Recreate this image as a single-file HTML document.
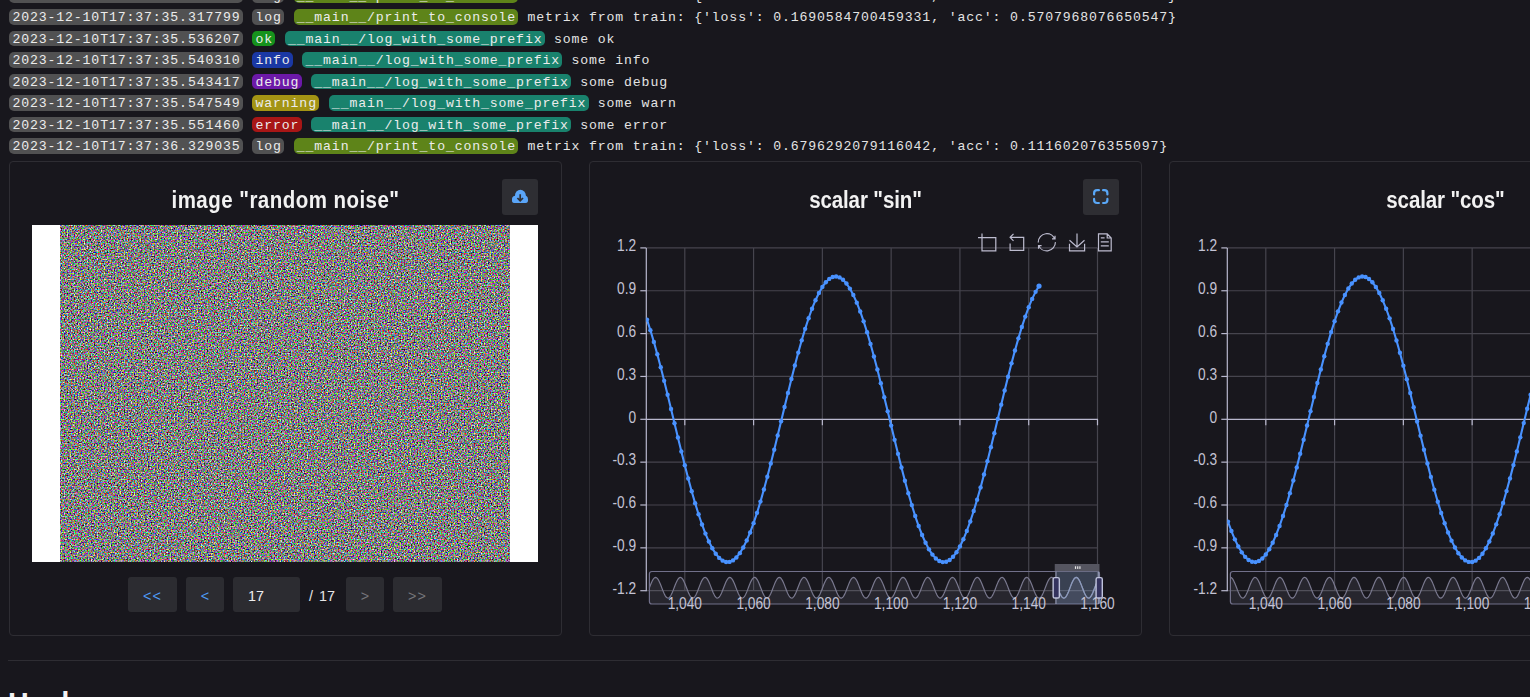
<!DOCTYPE html><html><head><meta charset="utf-8"><style>
html,body{margin:0;padding:0;background:#18171d;width:1530px;height:697px;overflow:hidden;position:relative}
.row{position:absolute;left:8.9px;white-space:pre;font:13.2px/17.4px "Liberation Mono",monospace;letter-spacing:0.86px;color:#e4e4e4;height:16px}
.b{display:inline-block;padding:0 2.37px 0 3.23px;margin:0 0.3px;border-radius:5px;height:15.6px;vertical-align:top;color:#ececec}
.card{position:absolute;top:161px;width:551px;height:473px;border:1px solid #2e2d33;border-radius:4px;box-sizing:content-box}
.title{position:absolute;top:187.8px;transform:scaleY(1.15);transform-origin:50% 19.5px;text-align:center;font:bold 20.5px/26px "Liberation Sans",sans-serif;color:#f2f2f2}
.btn36{position:absolute;width:36px;height:36px;border-radius:3px;background:#2e2e33}
.al{font:15.6px "Liberation Sans",sans-serif;fill:#c4c3d4}
.pbtn{position:absolute;top:577px;height:35px;border-radius:3px;background:#2c2c31;font:14.4px/39px "Liberation Sans",sans-serif;text-align:center}

</style></head><body>
<div class="row" style="top:-12.50px"><span class="b" style="background:#515152">2023-12-10T17:37:35.111111</span> <span class="b" style="background:#515152">log</span> <span class="b" style="background:#5e8419">__main__/print_to_console</span> metrix from train: {&#x27;loss&#x27;: 0.2690584700459331, &#x27;acc&#x27;: 0.4707968076650547}</div>
<div class="row" style="top:9.00px"><span class="b" style="background:#515152">2023-12-10T17:37:35.317799</span> <span class="b" style="background:#515152">log</span> <span class="b" style="background:#5e8419">__main__/print_to_console</span> metrix from train: {&#x27;loss&#x27;: 0.1690584700459331, &#x27;acc&#x27;: 0.5707968076650547}</div>
<div class="row" style="top:30.50px"><span class="b" style="background:#515152">2023-12-10T17:37:35.536207</span> <span class="b" style="background:#16921c">ok</span> <span class="b" style="background:#19826d">__main__/log_with_some_prefix</span> some ok</div>
<div class="row" style="top:52.00px"><span class="b" style="background:#515152">2023-12-10T17:37:35.540310</span> <span class="b" style="background:#1a38a4">info</span> <span class="b" style="background:#19826d">__main__/log_with_some_prefix</span> some info</div>
<div class="row" style="top:73.50px"><span class="b" style="background:#515152">2023-12-10T17:37:35.543417</span> <span class="b" style="background:#6c19a8">debug</span> <span class="b" style="background:#19826d">__main__/log_with_some_prefix</span> some debug</div>
<div class="row" style="top:95.00px"><span class="b" style="background:#515152">2023-12-10T17:37:35.547549</span> <span class="b" style="background:#a39414">warning</span> <span class="b" style="background:#19826d">__main__/log_with_some_prefix</span> some warn</div>
<div class="row" style="top:116.50px"><span class="b" style="background:#515152">2023-12-10T17:37:35.551460</span> <span class="b" style="background:#a81616">error</span> <span class="b" style="background:#19826d">__main__/log_with_some_prefix</span> some error</div>
<div class="row" style="top:138.00px"><span class="b" style="background:#515152">2023-12-10T17:37:36.329035</span> <span class="b" style="background:#515152">log</span> <span class="b" style="background:#5e8419">__main__/print_to_console</span> metrix from train: {&#x27;loss&#x27;: 0.6796292079116042, &#x27;acc&#x27;: 0.111602076355097}</div>
<div class="card" style="left:9px"></div>
<div class="title" style="left:9px;width:553px;letter-spacing:0.46px">image "random noise"</div>
<div class="btn36" style="left:502px;top:179px"><svg width="36" height="36" viewBox="0 0 36 36" style="position:absolute;left:0;top:0"><g fill="#5aa5f8"><circle cx="13.6" cy="20.3" r="3.6"/><circle cx="18.4" cy="16.2" r="5.4"/><circle cx="22.3" cy="20.2" r="3.6"/><rect x="10" y="19" width="15.9" height="5.1" rx="2.5"/></g><path d="M18.2,15.2 V21.6 M15.4,19 L18.2,21.9 L21,19" stroke="#2e2e33" stroke-width="1.7" fill="none"/></svg></div>
<div style="position:absolute;left:32px;top:225px;width:506px;height:337px;background:#fff"></div>
<svg style="position:absolute;left:60px;top:225px" width="450" height="337"><filter id="nz" x="0" y="0" width="100%" height="100%" color-interpolation-filters="sRGB"><feTurbulence type="fractalNoise" baseFrequency="0.7" numOctaves="1" seed="7"/><feComponentTransfer><feFuncR type="linear" slope="2.5" intercept="-0.75"/><feFuncG type="linear" slope="2.5" intercept="-0.75"/><feFuncB type="linear" slope="2.5" intercept="-0.75"/><feFuncA type="linear" slope="0" intercept="1"/></feComponentTransfer></filter><rect width="450" height="337" filter="url(#nz)"/></svg>
<div class="pbtn" style="left:128px;width:49px;color:#4f9cf8;letter-spacing:1px">&lt;&lt;</div>
<div class="pbtn" style="left:186px;width:38px;color:#4f9cf8">&lt;</div>
<div class="pbtn" style="left:233px;width:67px;color:#eeeeee;text-align:left;text-indent:15px">17</div>
<div style="position:absolute;left:309px;top:577px;font:14.4px/39px 'Liberation Sans',sans-serif;color:#e6e6e6;word-spacing:2px">/ 17</div>
<div class="pbtn" style="left:346px;width:38px;color:#77777c">&gt;</div>
<div class="pbtn" style="left:393px;width:49px;color:#77777c;letter-spacing:1px">&gt;&gt;</div>
<div class="card" style="left:589px"></div>
<div class="title" style="left:589px;width:553px;letter-spacing:-0.12px">scalar &quot;sin&quot;</div>
<div class="btn36" style="left:1083px;top:179px"><svg width="36" height="36" viewBox="0 0 36 36" style="position:absolute;left:0;top:0"><path d="M11.1,15.4 V14.2 a3,3 0 0 1 3,-3 H15.9 M20.1,11.2 H21.4 a3,3 0 0 1 3,3 V15.4 M24.4,19.9 V21 a3,3 0 0 1 -3,3 H20.1 M15.9,24 H14.1 a3,3 0 0 1 -3,-3 V19.9" fill="none" stroke="#5aa8f8" stroke-width="2.2" stroke-linecap="round"/></svg></div>
<svg style="position:absolute;left:0;top:0" width="1800" height="697"><line x1="646.3" y1="247.9" x2="1097.5" y2="247.9" stroke="#46454e" stroke-width="1.2"/><line x1="646.3" y1="290.75" x2="1097.5" y2="290.75" stroke="#46454e" stroke-width="1.2"/><line x1="646.3" y1="333.6" x2="1097.5" y2="333.6" stroke="#46454e" stroke-width="1.2"/><line x1="646.3" y1="376.45" x2="1097.5" y2="376.45" stroke="#46454e" stroke-width="1.2"/><line x1="646.3" y1="462.15" x2="1097.5" y2="462.15" stroke="#46454e" stroke-width="1.2"/><line x1="646.3" y1="505.0" x2="1097.5" y2="505.0" stroke="#46454e" stroke-width="1.2"/><line x1="646.3" y1="547.85" x2="1097.5" y2="547.85" stroke="#46454e" stroke-width="1.2"/><line x1="646.3" y1="590.7" x2="1097.5" y2="590.7" stroke="#46454e" stroke-width="1.2"/><line x1="684.8" y1="247.9" x2="684.8" y2="590.7" stroke="#46454e" stroke-width="1.2"/><line x1="753.58" y1="247.9" x2="753.58" y2="590.7" stroke="#46454e" stroke-width="1.2"/><line x1="822.37" y1="247.9" x2="822.37" y2="590.7" stroke="#46454e" stroke-width="1.2"/><line x1="891.15" y1="247.9" x2="891.15" y2="590.7" stroke="#46454e" stroke-width="1.2"/><line x1="959.93" y1="247.9" x2="959.93" y2="590.7" stroke="#46454e" stroke-width="1.2"/><line x1="1028.72" y1="247.9" x2="1028.72" y2="590.7" stroke="#46454e" stroke-width="1.2"/><line x1="1097.5" y1="247.9" x2="1097.5" y2="590.7" stroke="#46454e" stroke-width="1.2"/><line x1="646.3" y1="247.9" x2="646.3" y2="591.2" stroke="#B9B8CE" stroke-width="1.2"/><line x1="640.3" y1="247.9" x2="646.3" y2="247.9" stroke="#B9B8CE" stroke-width="1.2"/><line x1="640.3" y1="290.75" x2="646.3" y2="290.75" stroke="#B9B8CE" stroke-width="1.2"/><line x1="640.3" y1="333.6" x2="646.3" y2="333.6" stroke="#B9B8CE" stroke-width="1.2"/><line x1="640.3" y1="376.45" x2="646.3" y2="376.45" stroke="#B9B8CE" stroke-width="1.2"/><line x1="640.3" y1="419.3" x2="646.3" y2="419.3" stroke="#B9B8CE" stroke-width="1.2"/><line x1="640.3" y1="462.15" x2="646.3" y2="462.15" stroke="#B9B8CE" stroke-width="1.2"/><line x1="640.3" y1="505.0" x2="646.3" y2="505.0" stroke="#B9B8CE" stroke-width="1.2"/><line x1="640.3" y1="547.85" x2="646.3" y2="547.85" stroke="#B9B8CE" stroke-width="1.2"/><line x1="640.3" y1="590.7" x2="646.3" y2="590.7" stroke="#B9B8CE" stroke-width="1.2"/><line x1="646.3" y1="419.3" x2="1098.0" y2="419.3" stroke="#B9B8CE" stroke-width="1.2"/><line x1="684.8" y1="419.3" x2="684.8" y2="425.3" stroke="#B9B8CE" stroke-width="1.2"/><line x1="753.58" y1="419.3" x2="753.58" y2="425.3" stroke="#B9B8CE" stroke-width="1.2"/><line x1="822.37" y1="419.3" x2="822.37" y2="425.3" stroke="#B9B8CE" stroke-width="1.2"/><line x1="891.15" y1="419.3" x2="891.15" y2="425.3" stroke="#B9B8CE" stroke-width="1.2"/><line x1="959.93" y1="419.3" x2="959.93" y2="425.3" stroke="#B9B8CE" stroke-width="1.2"/><line x1="1028.72" y1="419.3" x2="1028.72" y2="425.3" stroke="#B9B8CE" stroke-width="1.2"/><line x1="1097.5" y1="419.3" x2="1097.5" y2="425.3" stroke="#B9B8CE" stroke-width="1.2"/><text transform="translate(636.10,251.10) scale(0.88,1)" text-anchor="end" class="al">1.2</text><text transform="translate(636.10,293.95) scale(0.88,1)" text-anchor="end" class="al">0.9</text><text transform="translate(636.10,336.80) scale(0.88,1)" text-anchor="end" class="al">0.6</text><text transform="translate(636.10,379.65) scale(0.88,1)" text-anchor="end" class="al">0.3</text><text transform="translate(636.10,422.50) scale(0.88,1)" text-anchor="end" class="al">0</text><text transform="translate(636.10,465.35) scale(0.88,1)" text-anchor="end" class="al">-0.3</text><text transform="translate(636.10,508.20) scale(0.88,1)" text-anchor="end" class="al">-0.6</text><text transform="translate(636.10,551.05) scale(0.88,1)" text-anchor="end" class="al">-0.9</text><text transform="translate(636.10,593.90) scale(0.88,1)" text-anchor="end" class="al">-1.2</text><clipPath id="cp0"><rect x="646.3" y="200" width="454.20000000000005" height="400"/></clipPath><g clip-path="url(#cp0)"><path d="M646.97,319.61 L650.41,330.32 L653.85,341.92 L657.29,354.29 L660.73,367.31 L664.16,380.85 L667.60,394.78 L671.04,408.95 L674.48,423.22 L677.92,437.45 L681.36,451.51 L684.80,465.24 L688.24,478.51 L691.68,491.19 L695.12,503.15 L698.56,514.28 L702.00,524.45 L705.44,533.58 L708.87,541.56 L712.31,548.32 L715.75,553.79 L719.19,557.92 L722.63,560.66 L726.07,562.00 L729.51,561.90 L732.95,560.38 L736.39,557.45 L739.83,553.14 L743.27,547.50 L746.71,540.57 L750.14,532.43 L753.58,523.16 L757.02,512.85 L760.46,501.61 L763.90,489.54 L767.34,476.78 L770.78,463.44 L774.22,449.65 L777.66,435.57 L781.10,421.32 L784.54,407.05 L787.98,392.91 L791.41,379.03 L794.85,365.55 L798.29,352.60 L801.73,340.33 L805.17,328.84 L808.61,318.26 L812.05,308.68 L815.49,300.22 L818.93,292.94 L822.37,286.92 L825.81,282.23 L829.25,278.91 L832.68,276.99 L836.12,276.49 L839.56,277.41 L843.00,279.76 L846.44,283.50 L849.88,288.60 L853.32,295.00 L856.76,302.64 L860.20,311.46 L863.64,321.34 L867.08,332.21 L870.52,343.95 L873.95,356.44 L877.39,369.55 L880.83,383.17 L884.27,397.15 L887.71,411.34 L891.15,425.62 L894.59,439.83 L898.03,453.84 L901.47,467.50 L904.91,480.69 L908.35,493.25 L911.79,505.08 L915.22,516.06 L918.66,526.06 L922.10,535.00 L925.54,542.78 L928.98,549.33 L932.42,554.58 L935.86,558.48 L939.30,560.99 L942.74,562.08 L946.18,561.74 L949.62,559.99 L953.06,556.82 L956.49,552.28 L959.93,546.42 L963.37,539.28 L966.81,530.95 L970.25,521.49 L973.69,511.02 L977.13,499.63 L980.57,487.44 L984.01,474.57 L987.45,461.15 L990.89,447.30 L994.33,433.18 L997.76,418.92 L1001.20,404.66 L1004.64,390.55 L1008.08,376.73 L1011.52,363.33 L1014.96,350.49 L1018.40,338.34 L1021.84,327.00 L1025.28,316.58 L1028.72,307.18 L1032.16,298.91 L1035.60,291.84 L1039.03,286.04" fill="none" stroke="#4992ff" stroke-width="2.1" stroke-linejoin="round"/><circle cx="646.97" cy="319.61" r="2.2" fill="#4992ff"/><circle cx="650.41" cy="330.32" r="2.2" fill="#4992ff"/><circle cx="653.85" cy="341.92" r="2.2" fill="#4992ff"/><circle cx="657.29" cy="354.29" r="2.2" fill="#4992ff"/><circle cx="660.73" cy="367.31" r="2.2" fill="#4992ff"/><circle cx="664.16" cy="380.85" r="2.2" fill="#4992ff"/><circle cx="667.60" cy="394.78" r="2.2" fill="#4992ff"/><circle cx="671.04" cy="408.95" r="2.2" fill="#4992ff"/><circle cx="674.48" cy="423.22" r="2.2" fill="#4992ff"/><circle cx="677.92" cy="437.45" r="2.2" fill="#4992ff"/><circle cx="681.36" cy="451.51" r="2.2" fill="#4992ff"/><circle cx="684.80" cy="465.24" r="2.2" fill="#4992ff"/><circle cx="688.24" cy="478.51" r="2.2" fill="#4992ff"/><circle cx="691.68" cy="491.19" r="2.2" fill="#4992ff"/><circle cx="695.12" cy="503.15" r="2.2" fill="#4992ff"/><circle cx="698.56" cy="514.28" r="2.2" fill="#4992ff"/><circle cx="702.00" cy="524.45" r="2.2" fill="#4992ff"/><circle cx="705.44" cy="533.58" r="2.2" fill="#4992ff"/><circle cx="708.87" cy="541.56" r="2.2" fill="#4992ff"/><circle cx="712.31" cy="548.32" r="2.2" fill="#4992ff"/><circle cx="715.75" cy="553.79" r="2.2" fill="#4992ff"/><circle cx="719.19" cy="557.92" r="2.2" fill="#4992ff"/><circle cx="722.63" cy="560.66" r="2.2" fill="#4992ff"/><circle cx="726.07" cy="562.00" r="2.2" fill="#4992ff"/><circle cx="729.51" cy="561.90" r="2.2" fill="#4992ff"/><circle cx="732.95" cy="560.38" r="2.2" fill="#4992ff"/><circle cx="736.39" cy="557.45" r="2.2" fill="#4992ff"/><circle cx="739.83" cy="553.14" r="2.2" fill="#4992ff"/><circle cx="743.27" cy="547.50" r="2.2" fill="#4992ff"/><circle cx="746.71" cy="540.57" r="2.2" fill="#4992ff"/><circle cx="750.14" cy="532.43" r="2.2" fill="#4992ff"/><circle cx="753.58" cy="523.16" r="2.2" fill="#4992ff"/><circle cx="757.02" cy="512.85" r="2.2" fill="#4992ff"/><circle cx="760.46" cy="501.61" r="2.2" fill="#4992ff"/><circle cx="763.90" cy="489.54" r="2.2" fill="#4992ff"/><circle cx="767.34" cy="476.78" r="2.2" fill="#4992ff"/><circle cx="770.78" cy="463.44" r="2.2" fill="#4992ff"/><circle cx="774.22" cy="449.65" r="2.2" fill="#4992ff"/><circle cx="777.66" cy="435.57" r="2.2" fill="#4992ff"/><circle cx="781.10" cy="421.32" r="2.2" fill="#4992ff"/><circle cx="784.54" cy="407.05" r="2.2" fill="#4992ff"/><circle cx="787.98" cy="392.91" r="2.2" fill="#4992ff"/><circle cx="791.41" cy="379.03" r="2.2" fill="#4992ff"/><circle cx="794.85" cy="365.55" r="2.2" fill="#4992ff"/><circle cx="798.29" cy="352.60" r="2.2" fill="#4992ff"/><circle cx="801.73" cy="340.33" r="2.2" fill="#4992ff"/><circle cx="805.17" cy="328.84" r="2.2" fill="#4992ff"/><circle cx="808.61" cy="318.26" r="2.2" fill="#4992ff"/><circle cx="812.05" cy="308.68" r="2.2" fill="#4992ff"/><circle cx="815.49" cy="300.22" r="2.2" fill="#4992ff"/><circle cx="818.93" cy="292.94" r="2.2" fill="#4992ff"/><circle cx="822.37" cy="286.92" r="2.2" fill="#4992ff"/><circle cx="825.81" cy="282.23" r="2.2" fill="#4992ff"/><circle cx="829.25" cy="278.91" r="2.2" fill="#4992ff"/><circle cx="832.68" cy="276.99" r="2.2" fill="#4992ff"/><circle cx="836.12" cy="276.49" r="2.2" fill="#4992ff"/><circle cx="839.56" cy="277.41" r="2.2" fill="#4992ff"/><circle cx="843.00" cy="279.76" r="2.2" fill="#4992ff"/><circle cx="846.44" cy="283.50" r="2.2" fill="#4992ff"/><circle cx="849.88" cy="288.60" r="2.2" fill="#4992ff"/><circle cx="853.32" cy="295.00" r="2.2" fill="#4992ff"/><circle cx="856.76" cy="302.64" r="2.2" fill="#4992ff"/><circle cx="860.20" cy="311.46" r="2.2" fill="#4992ff"/><circle cx="863.64" cy="321.34" r="2.2" fill="#4992ff"/><circle cx="867.08" cy="332.21" r="2.2" fill="#4992ff"/><circle cx="870.52" cy="343.95" r="2.2" fill="#4992ff"/><circle cx="873.95" cy="356.44" r="2.2" fill="#4992ff"/><circle cx="877.39" cy="369.55" r="2.2" fill="#4992ff"/><circle cx="880.83" cy="383.17" r="2.2" fill="#4992ff"/><circle cx="884.27" cy="397.15" r="2.2" fill="#4992ff"/><circle cx="887.71" cy="411.34" r="2.2" fill="#4992ff"/><circle cx="891.15" cy="425.62" r="2.2" fill="#4992ff"/><circle cx="894.59" cy="439.83" r="2.2" fill="#4992ff"/><circle cx="898.03" cy="453.84" r="2.2" fill="#4992ff"/><circle cx="901.47" cy="467.50" r="2.2" fill="#4992ff"/><circle cx="904.91" cy="480.69" r="2.2" fill="#4992ff"/><circle cx="908.35" cy="493.25" r="2.2" fill="#4992ff"/><circle cx="911.79" cy="505.08" r="2.2" fill="#4992ff"/><circle cx="915.22" cy="516.06" r="2.2" fill="#4992ff"/><circle cx="918.66" cy="526.06" r="2.2" fill="#4992ff"/><circle cx="922.10" cy="535.00" r="2.2" fill="#4992ff"/><circle cx="925.54" cy="542.78" r="2.2" fill="#4992ff"/><circle cx="928.98" cy="549.33" r="2.2" fill="#4992ff"/><circle cx="932.42" cy="554.58" r="2.2" fill="#4992ff"/><circle cx="935.86" cy="558.48" r="2.2" fill="#4992ff"/><circle cx="939.30" cy="560.99" r="2.2" fill="#4992ff"/><circle cx="942.74" cy="562.08" r="2.2" fill="#4992ff"/><circle cx="946.18" cy="561.74" r="2.2" fill="#4992ff"/><circle cx="949.62" cy="559.99" r="2.2" fill="#4992ff"/><circle cx="953.06" cy="556.82" r="2.2" fill="#4992ff"/><circle cx="956.49" cy="552.28" r="2.2" fill="#4992ff"/><circle cx="959.93" cy="546.42" r="2.2" fill="#4992ff"/><circle cx="963.37" cy="539.28" r="2.2" fill="#4992ff"/><circle cx="966.81" cy="530.95" r="2.2" fill="#4992ff"/><circle cx="970.25" cy="521.49" r="2.2" fill="#4992ff"/><circle cx="973.69" cy="511.02" r="2.2" fill="#4992ff"/><circle cx="977.13" cy="499.63" r="2.2" fill="#4992ff"/><circle cx="980.57" cy="487.44" r="2.2" fill="#4992ff"/><circle cx="984.01" cy="474.57" r="2.2" fill="#4992ff"/><circle cx="987.45" cy="461.15" r="2.2" fill="#4992ff"/><circle cx="990.89" cy="447.30" r="2.2" fill="#4992ff"/><circle cx="994.33" cy="433.18" r="2.2" fill="#4992ff"/><circle cx="997.76" cy="418.92" r="2.2" fill="#4992ff"/><circle cx="1001.20" cy="404.66" r="2.2" fill="#4992ff"/><circle cx="1004.64" cy="390.55" r="2.2" fill="#4992ff"/><circle cx="1008.08" cy="376.73" r="2.2" fill="#4992ff"/><circle cx="1011.52" cy="363.33" r="2.2" fill="#4992ff"/><circle cx="1014.96" cy="350.49" r="2.2" fill="#4992ff"/><circle cx="1018.40" cy="338.34" r="2.2" fill="#4992ff"/><circle cx="1021.84" cy="327.00" r="2.2" fill="#4992ff"/><circle cx="1025.28" cy="316.58" r="2.2" fill="#4992ff"/><circle cx="1028.72" cy="307.18" r="2.2" fill="#4992ff"/><circle cx="1032.16" cy="298.91" r="2.2" fill="#4992ff"/><circle cx="1035.60" cy="291.84" r="2.2" fill="#4992ff"/><circle cx="1039.03" cy="286.04" r="2.6" fill="#4992ff"/></g><path d="M649.40,587.75 L650.19,585.69 L650.98,583.72 L651.76,581.91 L652.55,580.33 L653.34,579.04 L654.13,578.10 L654.91,577.55 L655.70,577.40 L656.49,577.67 L657.28,578.34 L658.06,579.38 L658.85,580.76 L659.64,582.41 L660.43,584.28 L661.21,586.29 L662.00,588.35 L662.79,590.39 L663.58,592.33 L664.36,594.08 L665.15,595.58 L665.94,596.77 L666.73,597.60 L667.51,598.03 L668.30,598.06 L669.09,597.67 L669.88,596.89 L670.66,595.75 L671.45,594.28 L672.24,592.56 L673.03,590.64 L673.81,588.61 L674.60,586.54 L675.39,584.53 L676.18,582.64 L676.97,580.95 L677.75,579.54 L678.54,578.45 L679.33,577.73 L680.12,577.42 L680.90,577.51 L681.69,578.01 L682.48,578.90 L683.27,580.15 L684.05,581.70 L684.84,583.48 L685.63,585.44 L686.42,587.49 L687.20,589.55 L687.99,591.54 L688.78,593.38 L689.57,594.99 L690.35,596.32 L691.14,597.30 L691.93,597.90 L692.72,598.10 L693.50,597.88 L694.29,597.27 L695.08,596.27 L695.87,594.93 L696.65,593.30 L697.44,591.46 L698.23,589.46 L699.02,587.40 L699.80,585.35 L700.59,583.40 L701.38,581.62 L702.17,580.09 L702.96,578.86 L703.74,577.98 L704.53,577.50 L705.32,577.42 L706.11,577.76 L706.89,578.49 L707.68,579.59 L708.47,581.02 L709.26,582.72 L710.04,584.61 L710.83,586.63 L711.62,588.70 L712.41,590.73 L713.19,592.64 L713.98,594.35 L714.77,595.81 L715.56,596.94 L716.34,597.70 L717.13,598.07 L717.92,598.02 L718.71,597.57 L719.49,596.73 L720.28,595.52 L721.07,594.01 L721.86,592.25 L722.64,590.31 L723.43,588.26 L724.22,586.20 L725.01,584.20 L725.79,582.34 L726.58,580.69 L727.37,579.33 L728.16,578.30 L728.95,577.65 L729.73,577.40 L730.52,577.57 L731.31,578.14 L732.10,579.09 L732.88,580.39 L733.67,581.98 L734.46,583.80 L735.25,585.78 L736.03,587.84 L736.82,589.90 L737.61,591.86 L738.40,593.67 L739.18,595.24 L739.97,596.51 L740.76,597.43 L741.55,597.96 L742.33,598.09 L743.12,597.81 L743.91,597.12 L744.70,596.06 L745.48,594.67 L746.27,593.01 L747.06,591.13 L747.85,589.12 L748.63,587.05 L749.42,585.02 L750.21,583.09 L751.00,581.35 L751.78,579.86 L752.57,578.68 L753.36,577.87 L754.15,577.46 L754.94,577.45 L755.72,577.85 L756.51,578.65 L757.30,579.81 L758.09,581.29 L758.87,583.02 L759.66,584.95 L760.45,586.98 L761.24,589.05 L762.02,591.06 L762.81,592.94 L763.60,594.62 L764.39,596.02 L765.17,597.09 L765.96,597.79 L766.75,598.09 L767.54,597.98 L768.32,597.46 L769.11,596.55 L769.90,595.29 L770.69,593.73 L771.47,591.93 L772.26,589.97 L773.05,587.91 L773.84,585.86 L774.62,583.87 L775.41,582.04 L776.20,580.44 L776.99,579.13 L777.77,578.16 L778.56,577.58 L779.35,577.40 L780.14,577.63 L780.93,578.27 L781.71,579.29 L782.50,580.64 L783.29,582.27 L784.08,584.13 L784.86,586.13 L785.65,588.19 L786.44,590.24 L787.23,592.18 L788.01,593.95 L788.80,595.47 L789.59,596.69 L790.38,597.55 L791.16,598.01 L791.95,598.07 L792.74,597.72 L793.53,596.97 L794.31,595.85 L795.10,594.41 L795.89,592.70 L796.68,590.80 L797.46,588.77 L798.25,586.71 L799.04,584.68 L799.83,582.78 L800.61,581.08 L801.40,579.64 L802.19,578.52 L802.98,577.77 L803.77,577.43 L804.55,577.49 L805.34,577.96 L806.13,578.82 L806.92,580.04 L807.70,581.56 L808.49,583.33 L809.28,585.28 L810.07,587.33 L810.85,589.39 L811.64,591.39 L812.43,593.24 L813.22,594.88 L814.00,596.22 L814.79,597.24 L815.58,597.87 L816.37,598.10 L817.15,597.92 L817.94,597.33 L818.73,596.36 L819.52,595.05 L820.30,593.44 L821.09,591.61 L821.88,589.63 L822.67,587.57 L823.45,585.51 L824.24,583.55 L825.03,581.76 L825.82,580.20 L826.60,578.94 L827.39,578.04 L828.18,577.52 L828.97,577.41 L829.76,577.71 L830.54,578.42 L831.33,579.49 L832.12,580.90 L832.91,582.57 L833.69,584.46 L834.48,586.47 L835.27,588.54 L836.06,590.57 L836.84,592.49 L837.63,594.23 L838.42,595.70 L839.21,596.86 L839.99,597.65 L840.78,598.05 L841.57,598.04 L842.36,597.62 L843.14,596.81 L843.93,595.63 L844.72,594.14 L845.51,592.40 L846.29,590.47 L847.08,588.43 L847.87,586.36 L848.66,584.35 L849.44,582.48 L850.23,580.81 L851.02,579.43 L851.81,578.37 L852.59,577.69 L853.38,577.41 L854.17,577.54 L854.96,578.08 L855.75,579.00 L856.53,580.27 L857.32,581.85 L858.11,583.65 L858.90,585.62 L859.68,587.68 L860.47,589.73 L861.26,591.71 L862.05,593.53 L862.83,595.12 L863.62,596.42 L864.41,597.37 L865.20,597.94 L865.98,598.10 L866.77,597.85 L867.56,597.19 L868.35,596.16 L869.13,594.79 L869.92,593.15 L870.71,591.29 L871.50,589.28 L872.28,587.22 L873.07,585.18 L873.86,583.24 L874.65,581.48 L875.43,579.97 L876.22,578.77 L877.01,577.92 L877.80,577.47 L878.58,577.43 L879.37,577.80 L880.16,578.57 L880.95,579.71 L881.74,581.16 L882.52,582.88 L883.31,584.79 L884.10,586.82 L884.89,588.88 L885.67,590.90 L886.46,592.80 L887.25,594.49 L888.04,595.92 L888.82,597.02 L889.61,597.75 L890.40,598.08 L891.19,598.00 L891.97,597.51 L892.76,596.63 L893.55,595.40 L894.34,593.86 L895.12,592.08 L895.91,590.13 L896.70,588.08 L897.49,586.02 L898.27,584.03 L899.06,582.18 L899.85,580.56 L900.64,579.22 L901.42,578.23 L902.21,577.61 L903.00,577.40 L903.79,577.60 L904.57,578.21 L905.36,579.19 L906.15,580.52 L906.94,582.13 L907.73,583.97 L908.51,585.96 L909.30,588.02 L910.09,590.07 L910.88,592.03 L911.66,593.82 L912.45,595.36 L913.24,596.60 L914.03,597.49 L914.81,597.99 L915.60,598.08 L916.39,597.76 L917.18,597.04 L917.96,595.95 L918.75,594.54 L919.54,592.85 L920.33,590.96 L921.11,588.94 L921.90,586.87 L922.69,584.84 L923.48,582.93 L924.26,581.20 L925.05,579.74 L925.84,578.60 L926.63,577.82 L927.41,577.44 L928.20,577.47 L928.99,577.91 L929.78,578.74 L930.56,579.93 L931.35,581.43 L932.14,583.19 L932.93,585.12 L933.72,587.16 L934.50,589.23 L935.29,591.23 L936.08,593.10 L936.87,594.75 L937.65,596.13 L938.44,597.17 L939.23,597.83 L940.02,598.10 L940.80,597.95 L941.59,597.39 L942.38,596.45 L943.17,595.16 L943.95,593.58 L944.74,591.76 L945.53,589.79 L946.32,587.73 L947.10,585.68 L947.89,583.70 L948.68,581.89 L949.47,580.31 L950.25,579.03 L951.04,578.10 L951.83,577.55 L952.62,577.40 L953.40,577.67 L954.19,578.35 L954.98,579.39 L955.77,580.77 L956.55,582.43 L957.34,584.30 L958.13,586.31 L958.92,588.37 L959.71,590.41 L960.49,592.35 L961.28,594.10 L962.07,595.59 L962.86,596.78 L963.64,597.60 L964.43,598.04 L965.22,598.06 L966.01,597.67 L966.79,596.89 L967.58,595.74 L968.37,594.27 L969.16,592.54 L969.94,590.62 L970.73,588.59 L971.52,586.53 L972.31,584.51 L973.09,582.62 L973.88,580.94 L974.67,579.52 L975.46,578.44 L976.24,577.73 L977.03,577.41 L977.82,577.51 L978.61,578.02 L979.39,578.91 L980.18,580.16 L980.97,581.71 L981.76,583.50 L982.54,585.46 L983.33,587.51 L984.12,589.57 L984.91,591.56 L985.70,593.40 L986.48,595.01 L987.27,596.33 L988.06,597.31 L988.85,597.91 L989.63,598.10 L990.42,597.88 L991.21,597.26 L992.00,596.26 L992.78,594.91 L993.57,593.29 L994.36,591.44 L995.15,589.45 L995.93,587.38 L996.72,585.34 L997.51,583.38 L998.30,581.61 L999.08,580.07 L999.87,578.85 L1000.66,577.98 L1001.45,577.49 L1002.23,577.42 L1003.02,577.76 L1003.81,578.50 L1004.60,579.60 L1005.38,581.03 L1006.17,582.73 L1006.96,584.63 L1007.75,586.65 L1008.53,588.72 L1009.32,590.75 L1010.11,592.66 L1010.90,594.37 L1011.69,595.82 L1012.47,596.94 L1013.26,597.71 L1014.05,598.07 L1014.84,598.02 L1015.62,597.56 L1016.41,596.72 L1017.20,595.51 L1017.99,594.00 L1018.77,592.23 L1019.56,590.29 L1020.35,588.24 L1021.14,586.18 L1021.92,584.18 L1022.71,582.32 L1023.50,580.68 L1024.29,579.32 L1025.07,578.29 L1025.86,577.65 L1026.65,577.40 L1027.44,577.57 L1028.22,578.14 L1029.01,579.10 L1029.80,580.40 L1030.59,582.00 L1031.37,583.82 L1032.16,585.80 L1032.95,587.86 L1033.74,589.91 L1034.52,591.88 L1035.31,593.68 L1036.10,595.25 L1036.89,596.52 L1037.68,597.44 L1038.46,597.97 L1039.25,598.09 L1040.04,597.80 L1040.83,597.11 L1041.61,596.05 L1042.40,594.66 L1043.19,592.99 L1043.98,591.11 L1044.76,589.10 L1045.55,587.04 L1046.34,585.00 L1047.13,583.07 L1047.91,581.33 L1048.70,579.85 L1049.49,578.68 L1050.28,577.87 L1051.06,577.45 L1051.85,577.45 L1052.64,577.86 L1053.43,578.66 L1054.21,579.82 L1055.00,581.30 L1055.79,583.04 L1056.58,584.96 L1057.36,587.00 L1058.15,589.07 L1058.94,591.08 L1059.73,592.96 L1060.51,594.63 L1061.30,596.03 L1062.09,597.10 L1062.88,597.80 L1063.67,598.09 L1064.45,597.97 L1065.24,597.45 L1066.03,596.54 L1066.82,595.28 L1067.60,593.71 L1068.39,591.91 L1069.18,589.95 L1069.97,587.90 L1070.75,585.84 L1071.54,583.85 L1072.33,582.03 L1073.12,580.43 L1073.90,579.12 L1074.69,578.16 L1075.48,577.58 L1076.27,577.40 L1077.05,577.64 L1077.84,578.28 L1078.63,579.30 L1079.42,580.65 L1080.20,582.29 L1080.99,584.15 L1081.78,586.14 L1082.57,588.21 L1083.35,590.25 L1084.14,592.20 L1084.93,593.97 L1085.72,595.49 L1086.50,596.70 L1087.29,597.55 L1088.08,598.02 L1088.87,598.07 L1089.66,597.72 L1090.44,596.96 L1091.23,595.84 L1092.02,594.40 L1092.81,592.69 L1093.59,590.78 L1094.38,588.76 L1095.17,586.69 L1095.96,584.67 L1096.74,582.76 L1097.53,581.06 L1098.32,579.63 L1099.11,578.51 L1099.5,604 L649.4,604 Z" fill="rgba(200,200,220,0.09)" stroke="none"/><path d="M649.40,587.75 L650.19,585.69 L650.98,583.72 L651.76,581.91 L652.55,580.33 L653.34,579.04 L654.13,578.10 L654.91,577.55 L655.70,577.40 L656.49,577.67 L657.28,578.34 L658.06,579.38 L658.85,580.76 L659.64,582.41 L660.43,584.28 L661.21,586.29 L662.00,588.35 L662.79,590.39 L663.58,592.33 L664.36,594.08 L665.15,595.58 L665.94,596.77 L666.73,597.60 L667.51,598.03 L668.30,598.06 L669.09,597.67 L669.88,596.89 L670.66,595.75 L671.45,594.28 L672.24,592.56 L673.03,590.64 L673.81,588.61 L674.60,586.54 L675.39,584.53 L676.18,582.64 L676.97,580.95 L677.75,579.54 L678.54,578.45 L679.33,577.73 L680.12,577.42 L680.90,577.51 L681.69,578.01 L682.48,578.90 L683.27,580.15 L684.05,581.70 L684.84,583.48 L685.63,585.44 L686.42,587.49 L687.20,589.55 L687.99,591.54 L688.78,593.38 L689.57,594.99 L690.35,596.32 L691.14,597.30 L691.93,597.90 L692.72,598.10 L693.50,597.88 L694.29,597.27 L695.08,596.27 L695.87,594.93 L696.65,593.30 L697.44,591.46 L698.23,589.46 L699.02,587.40 L699.80,585.35 L700.59,583.40 L701.38,581.62 L702.17,580.09 L702.96,578.86 L703.74,577.98 L704.53,577.50 L705.32,577.42 L706.11,577.76 L706.89,578.49 L707.68,579.59 L708.47,581.02 L709.26,582.72 L710.04,584.61 L710.83,586.63 L711.62,588.70 L712.41,590.73 L713.19,592.64 L713.98,594.35 L714.77,595.81 L715.56,596.94 L716.34,597.70 L717.13,598.07 L717.92,598.02 L718.71,597.57 L719.49,596.73 L720.28,595.52 L721.07,594.01 L721.86,592.25 L722.64,590.31 L723.43,588.26 L724.22,586.20 L725.01,584.20 L725.79,582.34 L726.58,580.69 L727.37,579.33 L728.16,578.30 L728.95,577.65 L729.73,577.40 L730.52,577.57 L731.31,578.14 L732.10,579.09 L732.88,580.39 L733.67,581.98 L734.46,583.80 L735.25,585.78 L736.03,587.84 L736.82,589.90 L737.61,591.86 L738.40,593.67 L739.18,595.24 L739.97,596.51 L740.76,597.43 L741.55,597.96 L742.33,598.09 L743.12,597.81 L743.91,597.12 L744.70,596.06 L745.48,594.67 L746.27,593.01 L747.06,591.13 L747.85,589.12 L748.63,587.05 L749.42,585.02 L750.21,583.09 L751.00,581.35 L751.78,579.86 L752.57,578.68 L753.36,577.87 L754.15,577.46 L754.94,577.45 L755.72,577.85 L756.51,578.65 L757.30,579.81 L758.09,581.29 L758.87,583.02 L759.66,584.95 L760.45,586.98 L761.24,589.05 L762.02,591.06 L762.81,592.94 L763.60,594.62 L764.39,596.02 L765.17,597.09 L765.96,597.79 L766.75,598.09 L767.54,597.98 L768.32,597.46 L769.11,596.55 L769.90,595.29 L770.69,593.73 L771.47,591.93 L772.26,589.97 L773.05,587.91 L773.84,585.86 L774.62,583.87 L775.41,582.04 L776.20,580.44 L776.99,579.13 L777.77,578.16 L778.56,577.58 L779.35,577.40 L780.14,577.63 L780.93,578.27 L781.71,579.29 L782.50,580.64 L783.29,582.27 L784.08,584.13 L784.86,586.13 L785.65,588.19 L786.44,590.24 L787.23,592.18 L788.01,593.95 L788.80,595.47 L789.59,596.69 L790.38,597.55 L791.16,598.01 L791.95,598.07 L792.74,597.72 L793.53,596.97 L794.31,595.85 L795.10,594.41 L795.89,592.70 L796.68,590.80 L797.46,588.77 L798.25,586.71 L799.04,584.68 L799.83,582.78 L800.61,581.08 L801.40,579.64 L802.19,578.52 L802.98,577.77 L803.77,577.43 L804.55,577.49 L805.34,577.96 L806.13,578.82 L806.92,580.04 L807.70,581.56 L808.49,583.33 L809.28,585.28 L810.07,587.33 L810.85,589.39 L811.64,591.39 L812.43,593.24 L813.22,594.88 L814.00,596.22 L814.79,597.24 L815.58,597.87 L816.37,598.10 L817.15,597.92 L817.94,597.33 L818.73,596.36 L819.52,595.05 L820.30,593.44 L821.09,591.61 L821.88,589.63 L822.67,587.57 L823.45,585.51 L824.24,583.55 L825.03,581.76 L825.82,580.20 L826.60,578.94 L827.39,578.04 L828.18,577.52 L828.97,577.41 L829.76,577.71 L830.54,578.42 L831.33,579.49 L832.12,580.90 L832.91,582.57 L833.69,584.46 L834.48,586.47 L835.27,588.54 L836.06,590.57 L836.84,592.49 L837.63,594.23 L838.42,595.70 L839.21,596.86 L839.99,597.65 L840.78,598.05 L841.57,598.04 L842.36,597.62 L843.14,596.81 L843.93,595.63 L844.72,594.14 L845.51,592.40 L846.29,590.47 L847.08,588.43 L847.87,586.36 L848.66,584.35 L849.44,582.48 L850.23,580.81 L851.02,579.43 L851.81,578.37 L852.59,577.69 L853.38,577.41 L854.17,577.54 L854.96,578.08 L855.75,579.00 L856.53,580.27 L857.32,581.85 L858.11,583.65 L858.90,585.62 L859.68,587.68 L860.47,589.73 L861.26,591.71 L862.05,593.53 L862.83,595.12 L863.62,596.42 L864.41,597.37 L865.20,597.94 L865.98,598.10 L866.77,597.85 L867.56,597.19 L868.35,596.16 L869.13,594.79 L869.92,593.15 L870.71,591.29 L871.50,589.28 L872.28,587.22 L873.07,585.18 L873.86,583.24 L874.65,581.48 L875.43,579.97 L876.22,578.77 L877.01,577.92 L877.80,577.47 L878.58,577.43 L879.37,577.80 L880.16,578.57 L880.95,579.71 L881.74,581.16 L882.52,582.88 L883.31,584.79 L884.10,586.82 L884.89,588.88 L885.67,590.90 L886.46,592.80 L887.25,594.49 L888.04,595.92 L888.82,597.02 L889.61,597.75 L890.40,598.08 L891.19,598.00 L891.97,597.51 L892.76,596.63 L893.55,595.40 L894.34,593.86 L895.12,592.08 L895.91,590.13 L896.70,588.08 L897.49,586.02 L898.27,584.03 L899.06,582.18 L899.85,580.56 L900.64,579.22 L901.42,578.23 L902.21,577.61 L903.00,577.40 L903.79,577.60 L904.57,578.21 L905.36,579.19 L906.15,580.52 L906.94,582.13 L907.73,583.97 L908.51,585.96 L909.30,588.02 L910.09,590.07 L910.88,592.03 L911.66,593.82 L912.45,595.36 L913.24,596.60 L914.03,597.49 L914.81,597.99 L915.60,598.08 L916.39,597.76 L917.18,597.04 L917.96,595.95 L918.75,594.54 L919.54,592.85 L920.33,590.96 L921.11,588.94 L921.90,586.87 L922.69,584.84 L923.48,582.93 L924.26,581.20 L925.05,579.74 L925.84,578.60 L926.63,577.82 L927.41,577.44 L928.20,577.47 L928.99,577.91 L929.78,578.74 L930.56,579.93 L931.35,581.43 L932.14,583.19 L932.93,585.12 L933.72,587.16 L934.50,589.23 L935.29,591.23 L936.08,593.10 L936.87,594.75 L937.65,596.13 L938.44,597.17 L939.23,597.83 L940.02,598.10 L940.80,597.95 L941.59,597.39 L942.38,596.45 L943.17,595.16 L943.95,593.58 L944.74,591.76 L945.53,589.79 L946.32,587.73 L947.10,585.68 L947.89,583.70 L948.68,581.89 L949.47,580.31 L950.25,579.03 L951.04,578.10 L951.83,577.55 L952.62,577.40 L953.40,577.67 L954.19,578.35 L954.98,579.39 L955.77,580.77 L956.55,582.43 L957.34,584.30 L958.13,586.31 L958.92,588.37 L959.71,590.41 L960.49,592.35 L961.28,594.10 L962.07,595.59 L962.86,596.78 L963.64,597.60 L964.43,598.04 L965.22,598.06 L966.01,597.67 L966.79,596.89 L967.58,595.74 L968.37,594.27 L969.16,592.54 L969.94,590.62 L970.73,588.59 L971.52,586.53 L972.31,584.51 L973.09,582.62 L973.88,580.94 L974.67,579.52 L975.46,578.44 L976.24,577.73 L977.03,577.41 L977.82,577.51 L978.61,578.02 L979.39,578.91 L980.18,580.16 L980.97,581.71 L981.76,583.50 L982.54,585.46 L983.33,587.51 L984.12,589.57 L984.91,591.56 L985.70,593.40 L986.48,595.01 L987.27,596.33 L988.06,597.31 L988.85,597.91 L989.63,598.10 L990.42,597.88 L991.21,597.26 L992.00,596.26 L992.78,594.91 L993.57,593.29 L994.36,591.44 L995.15,589.45 L995.93,587.38 L996.72,585.34 L997.51,583.38 L998.30,581.61 L999.08,580.07 L999.87,578.85 L1000.66,577.98 L1001.45,577.49 L1002.23,577.42 L1003.02,577.76 L1003.81,578.50 L1004.60,579.60 L1005.38,581.03 L1006.17,582.73 L1006.96,584.63 L1007.75,586.65 L1008.53,588.72 L1009.32,590.75 L1010.11,592.66 L1010.90,594.37 L1011.69,595.82 L1012.47,596.94 L1013.26,597.71 L1014.05,598.07 L1014.84,598.02 L1015.62,597.56 L1016.41,596.72 L1017.20,595.51 L1017.99,594.00 L1018.77,592.23 L1019.56,590.29 L1020.35,588.24 L1021.14,586.18 L1021.92,584.18 L1022.71,582.32 L1023.50,580.68 L1024.29,579.32 L1025.07,578.29 L1025.86,577.65 L1026.65,577.40 L1027.44,577.57 L1028.22,578.14 L1029.01,579.10 L1029.80,580.40 L1030.59,582.00 L1031.37,583.82 L1032.16,585.80 L1032.95,587.86 L1033.74,589.91 L1034.52,591.88 L1035.31,593.68 L1036.10,595.25 L1036.89,596.52 L1037.68,597.44 L1038.46,597.97 L1039.25,598.09 L1040.04,597.80 L1040.83,597.11 L1041.61,596.05 L1042.40,594.66 L1043.19,592.99 L1043.98,591.11 L1044.76,589.10 L1045.55,587.04 L1046.34,585.00 L1047.13,583.07 L1047.91,581.33 L1048.70,579.85 L1049.49,578.68 L1050.28,577.87 L1051.06,577.45 L1051.85,577.45 L1052.64,577.86 L1053.43,578.66 L1054.21,579.82 L1055.00,581.30 L1055.79,583.04 L1056.58,584.96 L1057.36,587.00 L1058.15,589.07 L1058.94,591.08 L1059.73,592.96 L1060.51,594.63 L1061.30,596.03 L1062.09,597.10 L1062.88,597.80 L1063.67,598.09 L1064.45,597.97 L1065.24,597.45 L1066.03,596.54 L1066.82,595.28 L1067.60,593.71 L1068.39,591.91 L1069.18,589.95 L1069.97,587.90 L1070.75,585.84 L1071.54,583.85 L1072.33,582.03 L1073.12,580.43 L1073.90,579.12 L1074.69,578.16 L1075.48,577.58 L1076.27,577.40 L1077.05,577.64 L1077.84,578.28 L1078.63,579.30 L1079.42,580.65 L1080.20,582.29 L1080.99,584.15 L1081.78,586.14 L1082.57,588.21 L1083.35,590.25 L1084.14,592.20 L1084.93,593.97 L1085.72,595.49 L1086.50,596.70 L1087.29,597.55 L1088.08,598.02 L1088.87,598.07 L1089.66,597.72 L1090.44,596.96 L1091.23,595.84 L1092.02,594.40 L1092.81,592.69 L1093.59,590.78 L1094.38,588.76 L1095.17,586.69 L1095.96,584.67 L1096.74,582.76 L1097.53,581.06 L1098.32,579.63 L1099.11,578.51" fill="none" stroke="#7a798f" stroke-width="1.2"/><rect x="649.4" y="571.5" width="450.1" height="32.5" rx="2.5" fill="none" stroke="#71708A" stroke-width="1.2"/><rect x="1056.25" y="571.5" width="42.950000000000045" height="32.5" fill="rgba(135,163,206,0.3)"/><rect x="1054.75" y="564" width="44.75000000000004" height="7.3" fill="#555560"/><line x1="1055.95" y1="571.5" x2="1055.95" y2="604" stroke="#9fa6c2" stroke-width="1.1"/><line x1="1098.8" y1="571.5" x2="1098.8" y2="604" stroke="#9fa6c2" stroke-width="1.1"/><path d="M649.40,587.75 L650.19,585.69 L650.98,583.72 L651.76,581.91 L652.55,580.33 L653.34,579.04 L654.13,578.10 L654.91,577.55 L655.70,577.40 L656.49,577.67 L657.28,578.34 L658.06,579.38 L658.85,580.76 L659.64,582.41 L660.43,584.28 L661.21,586.29 L662.00,588.35 L662.79,590.39 L663.58,592.33 L664.36,594.08 L665.15,595.58 L665.94,596.77 L666.73,597.60 L667.51,598.03 L668.30,598.06 L669.09,597.67 L669.88,596.89 L670.66,595.75 L671.45,594.28 L672.24,592.56 L673.03,590.64 L673.81,588.61 L674.60,586.54 L675.39,584.53 L676.18,582.64 L676.97,580.95 L677.75,579.54 L678.54,578.45 L679.33,577.73 L680.12,577.42 L680.90,577.51 L681.69,578.01 L682.48,578.90 L683.27,580.15 L684.05,581.70 L684.84,583.48 L685.63,585.44 L686.42,587.49 L687.20,589.55 L687.99,591.54 L688.78,593.38 L689.57,594.99 L690.35,596.32 L691.14,597.30 L691.93,597.90 L692.72,598.10 L693.50,597.88 L694.29,597.27 L695.08,596.27 L695.87,594.93 L696.65,593.30 L697.44,591.46 L698.23,589.46 L699.02,587.40 L699.80,585.35 L700.59,583.40 L701.38,581.62 L702.17,580.09 L702.96,578.86 L703.74,577.98 L704.53,577.50 L705.32,577.42 L706.11,577.76 L706.89,578.49 L707.68,579.59 L708.47,581.02 L709.26,582.72 L710.04,584.61 L710.83,586.63 L711.62,588.70 L712.41,590.73 L713.19,592.64 L713.98,594.35 L714.77,595.81 L715.56,596.94 L716.34,597.70 L717.13,598.07 L717.92,598.02 L718.71,597.57 L719.49,596.73 L720.28,595.52 L721.07,594.01 L721.86,592.25 L722.64,590.31 L723.43,588.26 L724.22,586.20 L725.01,584.20 L725.79,582.34 L726.58,580.69 L727.37,579.33 L728.16,578.30 L728.95,577.65 L729.73,577.40 L730.52,577.57 L731.31,578.14 L732.10,579.09 L732.88,580.39 L733.67,581.98 L734.46,583.80 L735.25,585.78 L736.03,587.84 L736.82,589.90 L737.61,591.86 L738.40,593.67 L739.18,595.24 L739.97,596.51 L740.76,597.43 L741.55,597.96 L742.33,598.09 L743.12,597.81 L743.91,597.12 L744.70,596.06 L745.48,594.67 L746.27,593.01 L747.06,591.13 L747.85,589.12 L748.63,587.05 L749.42,585.02 L750.21,583.09 L751.00,581.35 L751.78,579.86 L752.57,578.68 L753.36,577.87 L754.15,577.46 L754.94,577.45 L755.72,577.85 L756.51,578.65 L757.30,579.81 L758.09,581.29 L758.87,583.02 L759.66,584.95 L760.45,586.98 L761.24,589.05 L762.02,591.06 L762.81,592.94 L763.60,594.62 L764.39,596.02 L765.17,597.09 L765.96,597.79 L766.75,598.09 L767.54,597.98 L768.32,597.46 L769.11,596.55 L769.90,595.29 L770.69,593.73 L771.47,591.93 L772.26,589.97 L773.05,587.91 L773.84,585.86 L774.62,583.87 L775.41,582.04 L776.20,580.44 L776.99,579.13 L777.77,578.16 L778.56,577.58 L779.35,577.40 L780.14,577.63 L780.93,578.27 L781.71,579.29 L782.50,580.64 L783.29,582.27 L784.08,584.13 L784.86,586.13 L785.65,588.19 L786.44,590.24 L787.23,592.18 L788.01,593.95 L788.80,595.47 L789.59,596.69 L790.38,597.55 L791.16,598.01 L791.95,598.07 L792.74,597.72 L793.53,596.97 L794.31,595.85 L795.10,594.41 L795.89,592.70 L796.68,590.80 L797.46,588.77 L798.25,586.71 L799.04,584.68 L799.83,582.78 L800.61,581.08 L801.40,579.64 L802.19,578.52 L802.98,577.77 L803.77,577.43 L804.55,577.49 L805.34,577.96 L806.13,578.82 L806.92,580.04 L807.70,581.56 L808.49,583.33 L809.28,585.28 L810.07,587.33 L810.85,589.39 L811.64,591.39 L812.43,593.24 L813.22,594.88 L814.00,596.22 L814.79,597.24 L815.58,597.87 L816.37,598.10 L817.15,597.92 L817.94,597.33 L818.73,596.36 L819.52,595.05 L820.30,593.44 L821.09,591.61 L821.88,589.63 L822.67,587.57 L823.45,585.51 L824.24,583.55 L825.03,581.76 L825.82,580.20 L826.60,578.94 L827.39,578.04 L828.18,577.52 L828.97,577.41 L829.76,577.71 L830.54,578.42 L831.33,579.49 L832.12,580.90 L832.91,582.57 L833.69,584.46 L834.48,586.47 L835.27,588.54 L836.06,590.57 L836.84,592.49 L837.63,594.23 L838.42,595.70 L839.21,596.86 L839.99,597.65 L840.78,598.05 L841.57,598.04 L842.36,597.62 L843.14,596.81 L843.93,595.63 L844.72,594.14 L845.51,592.40 L846.29,590.47 L847.08,588.43 L847.87,586.36 L848.66,584.35 L849.44,582.48 L850.23,580.81 L851.02,579.43 L851.81,578.37 L852.59,577.69 L853.38,577.41 L854.17,577.54 L854.96,578.08 L855.75,579.00 L856.53,580.27 L857.32,581.85 L858.11,583.65 L858.90,585.62 L859.68,587.68 L860.47,589.73 L861.26,591.71 L862.05,593.53 L862.83,595.12 L863.62,596.42 L864.41,597.37 L865.20,597.94 L865.98,598.10 L866.77,597.85 L867.56,597.19 L868.35,596.16 L869.13,594.79 L869.92,593.15 L870.71,591.29 L871.50,589.28 L872.28,587.22 L873.07,585.18 L873.86,583.24 L874.65,581.48 L875.43,579.97 L876.22,578.77 L877.01,577.92 L877.80,577.47 L878.58,577.43 L879.37,577.80 L880.16,578.57 L880.95,579.71 L881.74,581.16 L882.52,582.88 L883.31,584.79 L884.10,586.82 L884.89,588.88 L885.67,590.90 L886.46,592.80 L887.25,594.49 L888.04,595.92 L888.82,597.02 L889.61,597.75 L890.40,598.08 L891.19,598.00 L891.97,597.51 L892.76,596.63 L893.55,595.40 L894.34,593.86 L895.12,592.08 L895.91,590.13 L896.70,588.08 L897.49,586.02 L898.27,584.03 L899.06,582.18 L899.85,580.56 L900.64,579.22 L901.42,578.23 L902.21,577.61 L903.00,577.40 L903.79,577.60 L904.57,578.21 L905.36,579.19 L906.15,580.52 L906.94,582.13 L907.73,583.97 L908.51,585.96 L909.30,588.02 L910.09,590.07 L910.88,592.03 L911.66,593.82 L912.45,595.36 L913.24,596.60 L914.03,597.49 L914.81,597.99 L915.60,598.08 L916.39,597.76 L917.18,597.04 L917.96,595.95 L918.75,594.54 L919.54,592.85 L920.33,590.96 L921.11,588.94 L921.90,586.87 L922.69,584.84 L923.48,582.93 L924.26,581.20 L925.05,579.74 L925.84,578.60 L926.63,577.82 L927.41,577.44 L928.20,577.47 L928.99,577.91 L929.78,578.74 L930.56,579.93 L931.35,581.43 L932.14,583.19 L932.93,585.12 L933.72,587.16 L934.50,589.23 L935.29,591.23 L936.08,593.10 L936.87,594.75 L937.65,596.13 L938.44,597.17 L939.23,597.83 L940.02,598.10 L940.80,597.95 L941.59,597.39 L942.38,596.45 L943.17,595.16 L943.95,593.58 L944.74,591.76 L945.53,589.79 L946.32,587.73 L947.10,585.68 L947.89,583.70 L948.68,581.89 L949.47,580.31 L950.25,579.03 L951.04,578.10 L951.83,577.55 L952.62,577.40 L953.40,577.67 L954.19,578.35 L954.98,579.39 L955.77,580.77 L956.55,582.43 L957.34,584.30 L958.13,586.31 L958.92,588.37 L959.71,590.41 L960.49,592.35 L961.28,594.10 L962.07,595.59 L962.86,596.78 L963.64,597.60 L964.43,598.04 L965.22,598.06 L966.01,597.67 L966.79,596.89 L967.58,595.74 L968.37,594.27 L969.16,592.54 L969.94,590.62 L970.73,588.59 L971.52,586.53 L972.31,584.51 L973.09,582.62 L973.88,580.94 L974.67,579.52 L975.46,578.44 L976.24,577.73 L977.03,577.41 L977.82,577.51 L978.61,578.02 L979.39,578.91 L980.18,580.16 L980.97,581.71 L981.76,583.50 L982.54,585.46 L983.33,587.51 L984.12,589.57 L984.91,591.56 L985.70,593.40 L986.48,595.01 L987.27,596.33 L988.06,597.31 L988.85,597.91 L989.63,598.10 L990.42,597.88 L991.21,597.26 L992.00,596.26 L992.78,594.91 L993.57,593.29 L994.36,591.44 L995.15,589.45 L995.93,587.38 L996.72,585.34 L997.51,583.38 L998.30,581.61 L999.08,580.07 L999.87,578.85 L1000.66,577.98 L1001.45,577.49 L1002.23,577.42 L1003.02,577.76 L1003.81,578.50 L1004.60,579.60 L1005.38,581.03 L1006.17,582.73 L1006.96,584.63 L1007.75,586.65 L1008.53,588.72 L1009.32,590.75 L1010.11,592.66 L1010.90,594.37 L1011.69,595.82 L1012.47,596.94 L1013.26,597.71 L1014.05,598.07 L1014.84,598.02 L1015.62,597.56 L1016.41,596.72 L1017.20,595.51 L1017.99,594.00 L1018.77,592.23 L1019.56,590.29 L1020.35,588.24 L1021.14,586.18 L1021.92,584.18 L1022.71,582.32 L1023.50,580.68 L1024.29,579.32 L1025.07,578.29 L1025.86,577.65 L1026.65,577.40 L1027.44,577.57 L1028.22,578.14 L1029.01,579.10 L1029.80,580.40 L1030.59,582.00 L1031.37,583.82 L1032.16,585.80 L1032.95,587.86 L1033.74,589.91 L1034.52,591.88 L1035.31,593.68 L1036.10,595.25 L1036.89,596.52 L1037.68,597.44 L1038.46,597.97 L1039.25,598.09 L1040.04,597.80 L1040.83,597.11 L1041.61,596.05 L1042.40,594.66 L1043.19,592.99 L1043.98,591.11 L1044.76,589.10 L1045.55,587.04 L1046.34,585.00 L1047.13,583.07 L1047.91,581.33 L1048.70,579.85 L1049.49,578.68 L1050.28,577.87 L1051.06,577.45 L1051.85,577.45 L1052.64,577.86 L1053.43,578.66 L1054.21,579.82 L1055.00,581.30 L1055.79,583.04 L1056.58,584.96 L1057.36,587.00 L1058.15,589.07 L1058.94,591.08 L1059.73,592.96 L1060.51,594.63 L1061.30,596.03 L1062.09,597.10 L1062.88,597.80 L1063.67,598.09 L1064.45,597.97 L1065.24,597.45 L1066.03,596.54 L1066.82,595.28 L1067.60,593.71 L1068.39,591.91 L1069.18,589.95 L1069.97,587.90 L1070.75,585.84 L1071.54,583.85 L1072.33,582.03 L1073.12,580.43 L1073.90,579.12 L1074.69,578.16 L1075.48,577.58 L1076.27,577.40 L1077.05,577.64 L1077.84,578.28 L1078.63,579.30 L1079.42,580.65 L1080.20,582.29 L1080.99,584.15 L1081.78,586.14 L1082.57,588.21 L1083.35,590.25 L1084.14,592.20 L1084.93,593.97 L1085.72,595.49 L1086.50,596.70 L1087.29,597.55 L1088.08,598.02 L1088.87,598.07 L1089.66,597.72 L1090.44,596.96 L1091.23,595.84 L1092.02,594.40 L1092.81,592.69 L1093.59,590.78 L1094.38,588.76 L1095.17,586.69 L1095.96,584.67 L1096.74,582.76 L1097.53,581.06 L1098.32,579.63 L1099.11,578.51" fill="none" stroke="#8d9bbd" stroke-width="1.2" clip-path="url(#sel0)"/><clipPath id="sel0"><rect x="1056.25" y="571.5" width="42.950000000000045" height="32.5"/></clipPath><rect x="1074.925" y="566.3" width="1.2" height="2.6" fill="#e8e8e8"/><rect x="1077.125" y="566.3" width="1.2" height="2.6" fill="#e8e8e8"/><rect x="1079.325" y="566.3" width="1.2" height="2.6" fill="#e8e8e8"/><rect x="1053.15" y="577.6" width="6.2" height="20.4" rx="1.6" fill="#34335e" stroke="#c0c4dc" stroke-width="1.4"/><rect x="1096.1000000000001" y="577.6" width="6.2" height="20.4" rx="1.6" fill="#34335e" stroke="#c0c4dc" stroke-width="1.4"/><text transform="translate(684.80,609.4) scale(0.88,1)" text-anchor="middle" class="al">1,040</text><text transform="translate(753.58,609.4) scale(0.88,1)" text-anchor="middle" class="al">1,060</text><text transform="translate(822.37,609.4) scale(0.88,1)" text-anchor="middle" class="al">1,080</text><text transform="translate(891.15,609.4) scale(0.88,1)" text-anchor="middle" class="al">1,100</text><text transform="translate(959.93,609.4) scale(0.88,1)" text-anchor="middle" class="al">1,120</text><text transform="translate(1028.72,609.4) scale(0.88,1)" text-anchor="middle" class="al">1,140</text><text transform="translate(1097.50,609.4) scale(0.88,1)" text-anchor="middle" class="al">1,160</text><g transform="translate(0,0)" fill="none" stroke="#bdbccf" stroke-width="1.2"><path d="M978,237.7 H995.8 V250.8 H982 V233.6"/><path d="M1013.5,233.8 L1010.1,237.3 L1013.5,240.8 M1010.1,237.3 H1023.7 V250.3 H1010.1 V243.5"/><path d="M1069.5,240.2 L1077,247 L1084.5,240.2 M1077,233.6 V247 M1069.5,243.8 V250.8 H1084.6 V243.8"/><path d="M1098.5,233.8 H1107.2 L1111.2,238 V250.8 H1098.5 Z M1107.2,233.8 V238 H1111.2 M1100.8,237.8 H1104.6 M1100.8,241.8 H1108.8 M1100.8,245.8 H1108.8"/><g transform="translate(1037.6,233.1) scale(0.30689655172413793)"><path d="M47,18.9h9.8V8.7 M56.3,20.1 C52.1,9,40.5,0.6,26.8,2.1C12.6,3.7,1.6,16.2,2.1,30.6 M13,41.1H3.1v10.2 M3.7,39.9c4.2,11.1,15.8,19.5,29.5,18 c14.2-1.6,25.2-14.1,24.7-28.5" stroke-width="3.9101123595505616"/></g></g></svg>
<div class="card" style="left:1169px"></div>
<div class="title" style="left:1169px;width:553px;letter-spacing:-0.12px">scalar &quot;cos&quot;</div>
<div class="btn36" style="left:1663px;top:179px"><svg width="36" height="36" viewBox="0 0 36 36" style="position:absolute;left:0;top:0"><path d="M11.1,15.4 V14.2 a3,3 0 0 1 3,-3 H15.9 M20.1,11.2 H21.4 a3,3 0 0 1 3,3 V15.4 M24.4,19.9 V21 a3,3 0 0 1 -3,3 H20.1 M15.9,24 H14.1 a3,3 0 0 1 -3,-3 V19.9" fill="none" stroke="#5aa8f8" stroke-width="2.2" stroke-linecap="round"/></svg></div>
<svg style="position:absolute;left:0;top:0" width="1800" height="697"><line x1="1227.3" y1="247.9" x2="1678.5" y2="247.9" stroke="#46454e" stroke-width="1.2"/><line x1="1227.3" y1="290.75" x2="1678.5" y2="290.75" stroke="#46454e" stroke-width="1.2"/><line x1="1227.3" y1="333.6" x2="1678.5" y2="333.6" stroke="#46454e" stroke-width="1.2"/><line x1="1227.3" y1="376.45" x2="1678.5" y2="376.45" stroke="#46454e" stroke-width="1.2"/><line x1="1227.3" y1="462.15" x2="1678.5" y2="462.15" stroke="#46454e" stroke-width="1.2"/><line x1="1227.3" y1="505.0" x2="1678.5" y2="505.0" stroke="#46454e" stroke-width="1.2"/><line x1="1227.3" y1="547.85" x2="1678.5" y2="547.85" stroke="#46454e" stroke-width="1.2"/><line x1="1227.3" y1="590.7" x2="1678.5" y2="590.7" stroke="#46454e" stroke-width="1.2"/><line x1="1265.8" y1="247.9" x2="1265.8" y2="590.7" stroke="#46454e" stroke-width="1.2"/><line x1="1334.58" y1="247.9" x2="1334.58" y2="590.7" stroke="#46454e" stroke-width="1.2"/><line x1="1403.37" y1="247.9" x2="1403.37" y2="590.7" stroke="#46454e" stroke-width="1.2"/><line x1="1472.15" y1="247.9" x2="1472.15" y2="590.7" stroke="#46454e" stroke-width="1.2"/><line x1="1540.93" y1="247.9" x2="1540.93" y2="590.7" stroke="#46454e" stroke-width="1.2"/><line x1="1609.72" y1="247.9" x2="1609.72" y2="590.7" stroke="#46454e" stroke-width="1.2"/><line x1="1678.5" y1="247.9" x2="1678.5" y2="590.7" stroke="#46454e" stroke-width="1.2"/><line x1="1227.3" y1="247.9" x2="1227.3" y2="591.2" stroke="#B9B8CE" stroke-width="1.2"/><line x1="1221.3" y1="247.9" x2="1227.3" y2="247.9" stroke="#B9B8CE" stroke-width="1.2"/><line x1="1221.3" y1="290.75" x2="1227.3" y2="290.75" stroke="#B9B8CE" stroke-width="1.2"/><line x1="1221.3" y1="333.6" x2="1227.3" y2="333.6" stroke="#B9B8CE" stroke-width="1.2"/><line x1="1221.3" y1="376.45" x2="1227.3" y2="376.45" stroke="#B9B8CE" stroke-width="1.2"/><line x1="1221.3" y1="419.3" x2="1227.3" y2="419.3" stroke="#B9B8CE" stroke-width="1.2"/><line x1="1221.3" y1="462.15" x2="1227.3" y2="462.15" stroke="#B9B8CE" stroke-width="1.2"/><line x1="1221.3" y1="505.0" x2="1227.3" y2="505.0" stroke="#B9B8CE" stroke-width="1.2"/><line x1="1221.3" y1="547.85" x2="1227.3" y2="547.85" stroke="#B9B8CE" stroke-width="1.2"/><line x1="1221.3" y1="590.7" x2="1227.3" y2="590.7" stroke="#B9B8CE" stroke-width="1.2"/><line x1="1227.3" y1="419.3" x2="1679.0" y2="419.3" stroke="#B9B8CE" stroke-width="1.2"/><line x1="1265.8" y1="419.3" x2="1265.8" y2="425.3" stroke="#B9B8CE" stroke-width="1.2"/><line x1="1334.58" y1="419.3" x2="1334.58" y2="425.3" stroke="#B9B8CE" stroke-width="1.2"/><line x1="1403.37" y1="419.3" x2="1403.37" y2="425.3" stroke="#B9B8CE" stroke-width="1.2"/><line x1="1472.15" y1="419.3" x2="1472.15" y2="425.3" stroke="#B9B8CE" stroke-width="1.2"/><line x1="1540.93" y1="419.3" x2="1540.93" y2="425.3" stroke="#B9B8CE" stroke-width="1.2"/><line x1="1609.72" y1="419.3" x2="1609.72" y2="425.3" stroke="#B9B8CE" stroke-width="1.2"/><line x1="1678.5" y1="419.3" x2="1678.5" y2="425.3" stroke="#B9B8CE" stroke-width="1.2"/><text transform="translate(1217.10,251.10) scale(0.88,1)" text-anchor="end" class="al">1.2</text><text transform="translate(1217.10,293.95) scale(0.88,1)" text-anchor="end" class="al">0.9</text><text transform="translate(1217.10,336.80) scale(0.88,1)" text-anchor="end" class="al">0.6</text><text transform="translate(1217.10,379.65) scale(0.88,1)" text-anchor="end" class="al">0.3</text><text transform="translate(1217.10,422.50) scale(0.88,1)" text-anchor="end" class="al">0</text><text transform="translate(1217.10,465.35) scale(0.88,1)" text-anchor="end" class="al">-0.3</text><text transform="translate(1217.10,508.20) scale(0.88,1)" text-anchor="end" class="al">-0.6</text><text transform="translate(1217.10,551.05) scale(0.88,1)" text-anchor="end" class="al">-0.9</text><text transform="translate(1217.10,593.90) scale(0.88,1)" text-anchor="end" class="al">-1.2</text><clipPath id="cp581"><rect x="1227.3" y="200" width="454.20000000000005" height="400"/></clipPath><g clip-path="url(#cp581)"><path d="M1227.97,521.58 L1231.41,531.03 L1234.85,539.35 L1238.29,546.48 L1241.73,552.33 L1245.16,556.86 L1248.60,560.01 L1252.04,561.75 L1255.48,562.08 L1258.92,560.97 L1262.36,558.45 L1265.80,554.54 L1269.24,549.28 L1272.68,542.72 L1276.12,534.93 L1279.56,525.98 L1283.00,515.96 L1286.44,504.98 L1289.87,493.14 L1293.31,480.57 L1296.75,467.38 L1300.19,453.72 L1303.63,439.71 L1307.07,425.49 L1310.51,411.21 L1313.95,397.02 L1317.39,383.04 L1320.83,369.43 L1324.27,356.32 L1327.71,343.84 L1331.14,332.11 L1334.58,321.25 L1338.02,311.37 L1341.46,302.57 L1344.90,294.94 L1348.34,288.55 L1351.78,283.46 L1355.22,279.73 L1358.66,277.40 L1362.10,276.48 L1365.54,277.00 L1368.98,278.93 L1372.41,282.27 L1375.85,286.97 L1379.29,293.00 L1382.73,300.29 L1386.17,308.77 L1389.61,318.35 L1393.05,328.94 L1396.49,340.44 L1399.93,352.72 L1403.37,365.67 L1406.81,379.15 L1410.25,393.03 L1413.68,407.18 L1417.12,421.45 L1420.56,435.70 L1424.00,449.78 L1427.44,463.56 L1430.88,476.89 L1434.32,489.66 L1437.76,501.71 L1441.20,512.95 L1444.64,523.25 L1448.08,532.51 L1451.52,540.64 L1454.95,547.55 L1458.39,553.19 L1461.83,557.48 L1465.27,560.40 L1468.71,561.91 L1472.15,561.99 L1475.59,560.65 L1479.03,557.89 L1482.47,553.75 L1485.91,548.27 L1489.35,541.49 L1492.79,533.50 L1496.22,524.36 L1499.66,514.18 L1503.10,503.05 L1506.54,491.08 L1509.98,478.39 L1513.42,465.12 L1516.86,451.38 L1520.30,437.33 L1523.74,423.09 L1527.18,408.82 L1530.62,394.65 L1534.06,380.73 L1537.49,367.19 L1540.93,354.17 L1544.37,341.81 L1547.81,330.22 L1551.25,319.52 L1554.69,309.81 L1558.13,301.20 L1561.57,293.77 L1565.01,287.60 L1568.45,282.74 L1571.89,279.24 L1575.33,277.15 L1578.76,276.47 L1582.20,277.22 L1585.64,279.39 L1589.08,282.96 L1592.52,287.89 L1595.96,294.14 L1599.40,301.63 L1602.84,310.30 L1606.28,320.06 L1609.72,330.81 L1613.16,342.45 L1616.60,354.85 L1620.03,367.90" fill="none" stroke="#4992ff" stroke-width="2.1" stroke-linejoin="round"/><circle cx="1227.97" cy="521.58" r="2.2" fill="#4992ff"/><circle cx="1231.41" cy="531.03" r="2.2" fill="#4992ff"/><circle cx="1234.85" cy="539.35" r="2.2" fill="#4992ff"/><circle cx="1238.29" cy="546.48" r="2.2" fill="#4992ff"/><circle cx="1241.73" cy="552.33" r="2.2" fill="#4992ff"/><circle cx="1245.16" cy="556.86" r="2.2" fill="#4992ff"/><circle cx="1248.60" cy="560.01" r="2.2" fill="#4992ff"/><circle cx="1252.04" cy="561.75" r="2.2" fill="#4992ff"/><circle cx="1255.48" cy="562.08" r="2.2" fill="#4992ff"/><circle cx="1258.92" cy="560.97" r="2.2" fill="#4992ff"/><circle cx="1262.36" cy="558.45" r="2.2" fill="#4992ff"/><circle cx="1265.80" cy="554.54" r="2.2" fill="#4992ff"/><circle cx="1269.24" cy="549.28" r="2.2" fill="#4992ff"/><circle cx="1272.68" cy="542.72" r="2.2" fill="#4992ff"/><circle cx="1276.12" cy="534.93" r="2.2" fill="#4992ff"/><circle cx="1279.56" cy="525.98" r="2.2" fill="#4992ff"/><circle cx="1283.00" cy="515.96" r="2.2" fill="#4992ff"/><circle cx="1286.44" cy="504.98" r="2.2" fill="#4992ff"/><circle cx="1289.87" cy="493.14" r="2.2" fill="#4992ff"/><circle cx="1293.31" cy="480.57" r="2.2" fill="#4992ff"/><circle cx="1296.75" cy="467.38" r="2.2" fill="#4992ff"/><circle cx="1300.19" cy="453.72" r="2.2" fill="#4992ff"/><circle cx="1303.63" cy="439.71" r="2.2" fill="#4992ff"/><circle cx="1307.07" cy="425.49" r="2.2" fill="#4992ff"/><circle cx="1310.51" cy="411.21" r="2.2" fill="#4992ff"/><circle cx="1313.95" cy="397.02" r="2.2" fill="#4992ff"/><circle cx="1317.39" cy="383.04" r="2.2" fill="#4992ff"/><circle cx="1320.83" cy="369.43" r="2.2" fill="#4992ff"/><circle cx="1324.27" cy="356.32" r="2.2" fill="#4992ff"/><circle cx="1327.71" cy="343.84" r="2.2" fill="#4992ff"/><circle cx="1331.14" cy="332.11" r="2.2" fill="#4992ff"/><circle cx="1334.58" cy="321.25" r="2.2" fill="#4992ff"/><circle cx="1338.02" cy="311.37" r="2.2" fill="#4992ff"/><circle cx="1341.46" cy="302.57" r="2.2" fill="#4992ff"/><circle cx="1344.90" cy="294.94" r="2.2" fill="#4992ff"/><circle cx="1348.34" cy="288.55" r="2.2" fill="#4992ff"/><circle cx="1351.78" cy="283.46" r="2.2" fill="#4992ff"/><circle cx="1355.22" cy="279.73" r="2.2" fill="#4992ff"/><circle cx="1358.66" cy="277.40" r="2.2" fill="#4992ff"/><circle cx="1362.10" cy="276.48" r="2.2" fill="#4992ff"/><circle cx="1365.54" cy="277.00" r="2.2" fill="#4992ff"/><circle cx="1368.98" cy="278.93" r="2.2" fill="#4992ff"/><circle cx="1372.41" cy="282.27" r="2.2" fill="#4992ff"/><circle cx="1375.85" cy="286.97" r="2.2" fill="#4992ff"/><circle cx="1379.29" cy="293.00" r="2.2" fill="#4992ff"/><circle cx="1382.73" cy="300.29" r="2.2" fill="#4992ff"/><circle cx="1386.17" cy="308.77" r="2.2" fill="#4992ff"/><circle cx="1389.61" cy="318.35" r="2.2" fill="#4992ff"/><circle cx="1393.05" cy="328.94" r="2.2" fill="#4992ff"/><circle cx="1396.49" cy="340.44" r="2.2" fill="#4992ff"/><circle cx="1399.93" cy="352.72" r="2.2" fill="#4992ff"/><circle cx="1403.37" cy="365.67" r="2.2" fill="#4992ff"/><circle cx="1406.81" cy="379.15" r="2.2" fill="#4992ff"/><circle cx="1410.25" cy="393.03" r="2.2" fill="#4992ff"/><circle cx="1413.68" cy="407.18" r="2.2" fill="#4992ff"/><circle cx="1417.12" cy="421.45" r="2.2" fill="#4992ff"/><circle cx="1420.56" cy="435.70" r="2.2" fill="#4992ff"/><circle cx="1424.00" cy="449.78" r="2.2" fill="#4992ff"/><circle cx="1427.44" cy="463.56" r="2.2" fill="#4992ff"/><circle cx="1430.88" cy="476.89" r="2.2" fill="#4992ff"/><circle cx="1434.32" cy="489.66" r="2.2" fill="#4992ff"/><circle cx="1437.76" cy="501.71" r="2.2" fill="#4992ff"/><circle cx="1441.20" cy="512.95" r="2.2" fill="#4992ff"/><circle cx="1444.64" cy="523.25" r="2.2" fill="#4992ff"/><circle cx="1448.08" cy="532.51" r="2.2" fill="#4992ff"/><circle cx="1451.52" cy="540.64" r="2.2" fill="#4992ff"/><circle cx="1454.95" cy="547.55" r="2.2" fill="#4992ff"/><circle cx="1458.39" cy="553.19" r="2.2" fill="#4992ff"/><circle cx="1461.83" cy="557.48" r="2.2" fill="#4992ff"/><circle cx="1465.27" cy="560.40" r="2.2" fill="#4992ff"/><circle cx="1468.71" cy="561.91" r="2.2" fill="#4992ff"/><circle cx="1472.15" cy="561.99" r="2.2" fill="#4992ff"/><circle cx="1475.59" cy="560.65" r="2.2" fill="#4992ff"/><circle cx="1479.03" cy="557.89" r="2.2" fill="#4992ff"/><circle cx="1482.47" cy="553.75" r="2.2" fill="#4992ff"/><circle cx="1485.91" cy="548.27" r="2.2" fill="#4992ff"/><circle cx="1489.35" cy="541.49" r="2.2" fill="#4992ff"/><circle cx="1492.79" cy="533.50" r="2.2" fill="#4992ff"/><circle cx="1496.22" cy="524.36" r="2.2" fill="#4992ff"/><circle cx="1499.66" cy="514.18" r="2.2" fill="#4992ff"/><circle cx="1503.10" cy="503.05" r="2.2" fill="#4992ff"/><circle cx="1506.54" cy="491.08" r="2.2" fill="#4992ff"/><circle cx="1509.98" cy="478.39" r="2.2" fill="#4992ff"/><circle cx="1513.42" cy="465.12" r="2.2" fill="#4992ff"/><circle cx="1516.86" cy="451.38" r="2.2" fill="#4992ff"/><circle cx="1520.30" cy="437.33" r="2.2" fill="#4992ff"/><circle cx="1523.74" cy="423.09" r="2.2" fill="#4992ff"/><circle cx="1527.18" cy="408.82" r="2.2" fill="#4992ff"/><circle cx="1530.62" cy="394.65" r="2.2" fill="#4992ff"/><circle cx="1534.06" cy="380.73" r="2.2" fill="#4992ff"/><circle cx="1537.49" cy="367.19" r="2.2" fill="#4992ff"/><circle cx="1540.93" cy="354.17" r="2.2" fill="#4992ff"/><circle cx="1544.37" cy="341.81" r="2.2" fill="#4992ff"/><circle cx="1547.81" cy="330.22" r="2.2" fill="#4992ff"/><circle cx="1551.25" cy="319.52" r="2.2" fill="#4992ff"/><circle cx="1554.69" cy="309.81" r="2.2" fill="#4992ff"/><circle cx="1558.13" cy="301.20" r="2.2" fill="#4992ff"/><circle cx="1561.57" cy="293.77" r="2.2" fill="#4992ff"/><circle cx="1565.01" cy="287.60" r="2.2" fill="#4992ff"/><circle cx="1568.45" cy="282.74" r="2.2" fill="#4992ff"/><circle cx="1571.89" cy="279.24" r="2.2" fill="#4992ff"/><circle cx="1575.33" cy="277.15" r="2.2" fill="#4992ff"/><circle cx="1578.76" cy="276.47" r="2.2" fill="#4992ff"/><circle cx="1582.20" cy="277.22" r="2.2" fill="#4992ff"/><circle cx="1585.64" cy="279.39" r="2.2" fill="#4992ff"/><circle cx="1589.08" cy="282.96" r="2.2" fill="#4992ff"/><circle cx="1592.52" cy="287.89" r="2.2" fill="#4992ff"/><circle cx="1595.96" cy="294.14" r="2.2" fill="#4992ff"/><circle cx="1599.40" cy="301.63" r="2.2" fill="#4992ff"/><circle cx="1602.84" cy="310.30" r="2.2" fill="#4992ff"/><circle cx="1606.28" cy="320.06" r="2.2" fill="#4992ff"/><circle cx="1609.72" cy="330.81" r="2.2" fill="#4992ff"/><circle cx="1613.16" cy="342.45" r="2.2" fill="#4992ff"/><circle cx="1616.60" cy="354.85" r="2.2" fill="#4992ff"/><circle cx="1620.03" cy="367.90" r="2.6" fill="#4992ff"/></g><path d="M1230.40,577.40 L1231.19,577.61 L1231.98,578.22 L1232.76,579.21 L1233.55,580.54 L1234.34,582.16 L1235.13,584.00 L1235.91,585.99 L1236.70,588.05 L1237.49,590.10 L1238.28,592.06 L1239.06,593.84 L1239.85,595.38 L1240.64,596.62 L1241.43,597.50 L1242.21,598.00 L1243.00,598.08 L1243.79,597.76 L1244.58,597.03 L1245.36,595.94 L1246.15,594.52 L1246.94,592.82 L1247.73,590.93 L1248.51,588.91 L1249.30,586.84 L1250.09,584.81 L1250.88,582.90 L1251.66,581.18 L1252.45,579.72 L1253.24,578.58 L1254.03,577.81 L1254.81,577.44 L1255.60,577.47 L1256.39,577.92 L1257.18,578.75 L1257.97,579.95 L1258.75,581.45 L1259.54,583.21 L1260.33,585.15 L1261.12,587.19 L1261.90,589.26 L1262.69,591.26 L1263.48,593.12 L1264.27,594.77 L1265.05,596.14 L1265.84,597.18 L1266.63,597.84 L1267.42,598.10 L1268.20,597.94 L1268.99,597.38 L1269.78,596.43 L1270.57,595.14 L1271.35,593.56 L1272.14,591.74 L1272.93,589.76 L1273.72,587.70 L1274.50,585.65 L1275.29,583.68 L1276.08,581.87 L1276.87,580.29 L1277.65,579.02 L1278.44,578.09 L1279.23,577.54 L1280.02,577.41 L1280.80,577.68 L1281.59,578.36 L1282.38,579.41 L1283.17,580.79 L1283.96,582.45 L1284.74,584.33 L1285.53,586.33 L1286.32,588.40 L1287.11,590.44 L1287.89,592.37 L1288.68,594.12 L1289.47,595.61 L1290.26,596.79 L1291.04,597.61 L1291.83,598.04 L1292.62,598.06 L1293.41,597.66 L1294.19,596.87 L1294.98,595.72 L1295.77,594.25 L1296.56,592.52 L1297.34,590.60 L1298.13,588.56 L1298.92,586.50 L1299.71,584.48 L1300.49,582.60 L1301.28,580.92 L1302.07,579.51 L1302.86,578.43 L1303.64,577.72 L1304.43,577.41 L1305.22,577.52 L1306.01,578.03 L1306.79,578.93 L1307.58,580.18 L1308.37,581.73 L1309.16,583.53 L1309.95,585.49 L1310.73,587.54 L1311.52,589.60 L1312.31,591.59 L1313.10,593.42 L1313.88,595.03 L1314.67,596.34 L1315.46,597.32 L1316.25,597.91 L1317.03,598.10 L1317.82,597.88 L1318.61,597.25 L1319.40,596.24 L1320.18,594.89 L1320.97,593.26 L1321.76,591.41 L1322.55,589.42 L1323.33,587.36 L1324.12,585.31 L1324.91,583.36 L1325.70,581.59 L1326.48,580.06 L1327.27,578.83 L1328.06,577.97 L1328.85,577.49 L1329.63,577.42 L1330.42,577.77 L1331.21,578.51 L1332.00,579.62 L1332.78,581.05 L1333.57,582.76 L1334.36,584.66 L1335.15,586.68 L1335.94,588.75 L1336.72,590.77 L1337.51,592.68 L1338.30,594.39 L1339.09,595.83 L1339.87,596.96 L1340.66,597.71 L1341.45,598.07 L1342.24,598.02 L1343.02,597.56 L1343.81,596.70 L1344.60,595.49 L1345.39,593.97 L1346.17,592.21 L1346.96,590.26 L1347.75,588.22 L1348.54,586.15 L1349.32,584.15 L1350.11,582.30 L1350.90,580.66 L1351.69,579.30 L1352.47,578.28 L1353.26,577.64 L1354.05,577.40 L1354.84,577.57 L1355.62,578.15 L1356.41,579.12 L1357.20,580.42 L1357.99,582.02 L1358.77,583.85 L1359.56,585.83 L1360.35,587.89 L1361.14,589.94 L1361.93,591.91 L1362.71,593.71 L1363.50,595.27 L1364.29,596.53 L1365.08,597.45 L1365.86,597.97 L1366.65,598.09 L1367.44,597.80 L1368.23,597.10 L1369.01,596.04 L1369.80,594.64 L1370.59,592.97 L1371.38,591.09 L1372.16,589.07 L1372.95,587.01 L1373.74,584.97 L1374.53,583.05 L1375.31,581.31 L1376.10,579.83 L1376.89,578.66 L1377.68,577.86 L1378.46,577.45 L1379.25,577.45 L1380.04,577.86 L1380.83,578.67 L1381.61,579.84 L1382.40,581.32 L1383.19,583.06 L1383.98,584.99 L1384.77,587.03 L1385.55,589.09 L1386.34,591.10 L1387.13,592.98 L1387.92,594.65 L1388.70,596.05 L1389.49,597.11 L1390.28,597.80 L1391.07,598.09 L1391.85,597.97 L1392.64,597.44 L1393.43,596.52 L1394.22,595.26 L1395.00,593.69 L1395.79,591.89 L1396.58,589.92 L1397.37,587.87 L1398.15,585.81 L1398.94,583.83 L1399.73,582.00 L1400.52,580.41 L1401.30,579.11 L1402.09,578.15 L1402.88,577.57 L1403.67,577.40 L1404.45,577.64 L1405.24,578.29 L1406.03,579.31 L1406.82,580.67 L1407.60,582.31 L1408.39,584.17 L1409.18,586.17 L1409.97,588.24 L1410.76,590.28 L1411.54,592.22 L1412.33,593.99 L1413.12,595.50 L1413.91,596.71 L1414.69,597.56 L1415.48,598.02 L1416.27,598.07 L1417.06,597.71 L1417.84,596.95 L1418.63,595.82 L1419.42,594.38 L1420.21,592.66 L1420.99,590.76 L1421.78,588.73 L1422.57,586.66 L1423.36,584.64 L1424.14,582.74 L1424.93,581.04 L1425.72,579.61 L1426.51,578.50 L1427.29,577.76 L1428.08,577.42 L1428.87,577.49 L1429.66,577.97 L1430.44,578.84 L1431.23,580.07 L1432.02,581.60 L1432.81,583.38 L1433.59,585.33 L1434.38,587.37 L1435.17,589.44 L1435.96,591.43 L1436.75,593.28 L1437.53,594.91 L1438.32,596.25 L1439.11,597.25 L1439.90,597.88 L1440.68,598.10 L1441.47,597.91 L1442.26,597.31 L1443.05,596.33 L1443.83,595.01 L1444.62,593.40 L1445.41,591.57 L1446.20,589.58 L1446.98,587.52 L1447.77,585.47 L1448.56,583.51 L1449.35,581.72 L1450.13,580.17 L1450.92,578.92 L1451.71,578.02 L1452.50,577.51 L1453.28,577.41 L1454.07,577.73 L1454.86,578.44 L1455.65,579.52 L1456.43,580.93 L1457.22,582.61 L1458.01,584.50 L1458.80,586.52 L1459.58,588.58 L1460.37,590.62 L1461.16,592.53 L1461.95,594.26 L1462.74,595.73 L1463.52,596.88 L1464.31,597.67 L1465.10,598.06 L1465.89,598.04 L1466.67,597.61 L1467.46,596.78 L1468.25,595.60 L1469.04,594.10 L1469.82,592.35 L1470.61,590.42 L1471.40,588.38 L1472.19,586.32 L1472.97,584.31 L1473.76,582.44 L1474.55,580.78 L1475.34,579.40 L1476.12,578.35 L1476.91,577.68 L1477.70,577.41 L1478.49,577.55 L1479.27,578.09 L1480.06,579.03 L1480.85,580.31 L1481.64,581.88 L1482.42,583.69 L1483.21,585.67 L1484.00,587.72 L1484.79,589.78 L1485.57,591.76 L1486.36,593.57 L1487.15,595.16 L1487.94,596.44 L1488.73,597.39 L1489.51,597.94 L1490.30,598.10 L1491.09,597.84 L1491.88,597.17 L1492.66,596.13 L1493.45,594.76 L1494.24,593.11 L1495.03,591.24 L1495.81,589.24 L1496.60,587.17 L1497.39,585.13 L1498.18,583.19 L1498.96,581.44 L1499.75,579.94 L1500.54,578.74 L1501.33,577.91 L1502.11,577.47 L1502.90,577.44 L1503.69,577.82 L1504.48,578.59 L1505.26,579.73 L1506.05,581.20 L1506.84,582.92 L1507.63,584.83 L1508.41,586.86 L1509.20,588.93 L1509.99,590.95 L1510.78,592.84 L1511.56,594.53 L1512.35,595.95 L1513.14,597.04 L1513.93,597.76 L1514.72,598.08 L1515.50,597.99 L1516.29,597.50 L1517.08,596.61 L1517.87,595.37 L1518.65,593.83 L1519.44,592.04 L1520.23,590.08 L1521.02,588.03 L1521.80,585.97 L1522.59,583.98 L1523.38,582.14 L1524.17,580.53 L1524.95,579.20 L1525.74,578.21 L1526.53,577.60 L1527.32,577.40 L1528.10,577.61 L1528.89,578.22 L1529.68,579.22 L1530.47,580.55 L1531.25,582.17 L1532.04,584.02 L1532.83,586.01 L1533.62,588.07 L1534.40,590.12 L1535.19,592.07 L1535.98,593.86 L1536.77,595.39 L1537.55,596.63 L1538.34,597.51 L1539.13,598.00 L1539.92,598.08 L1540.71,597.75 L1541.49,597.02 L1542.28,595.93 L1543.07,594.50 L1543.86,592.81 L1544.64,590.91 L1545.43,588.89 L1546.22,586.83 L1547.01,584.80 L1547.79,582.88 L1548.58,581.17 L1549.37,579.71 L1550.16,578.58 L1550.94,577.81 L1551.73,577.43 L1552.52,577.47 L1553.31,577.92 L1554.09,578.76 L1554.88,579.96 L1555.67,581.47 L1556.46,583.23 L1557.24,585.17 L1558.03,587.21 L1558.82,589.27 L1559.61,591.28 L1560.39,593.14 L1561.18,594.79 L1561.97,596.16 L1562.76,597.19 L1563.54,597.84 L1564.33,598.10 L1565.12,597.94 L1565.91,597.37 L1566.70,596.42 L1567.48,595.13 L1568.27,593.54 L1569.06,591.72 L1569.85,589.74 L1570.63,587.69 L1571.42,585.63 L1572.21,583.66 L1573.00,581.85 L1573.78,580.28 L1574.57,579.01 L1575.36,578.08 L1576.15,577.54 L1576.93,577.41 L1577.72,577.69 L1578.51,578.37 L1579.30,579.42 L1580.08,580.81 L1580.87,582.47 L1581.66,584.34 L1582.45,586.35 L1583.23,588.42 L1584.02,590.46 L1584.81,592.39 L1585.60,594.13 L1586.38,595.62 L1587.17,596.80 L1587.96,597.62 L1588.75,598.04 L1589.53,598.05 L1590.32,597.66 L1591.11,596.86 L1591.90,595.71 L1592.69,594.23 L1593.47,592.50 L1594.26,590.58 L1595.05,588.55 L1595.84,586.48 L1596.62,584.46 L1597.41,582.58 L1598.20,580.90 L1598.99,579.50 L1599.77,578.42 L1600.56,577.72 L1601.35,577.41 L1602.14,577.52 L1602.92,578.04 L1603.71,578.94 L1604.50,580.19 L1605.29,581.75 L1606.07,583.54 L1606.86,585.51 L1607.65,587.56 L1608.44,589.62 L1609.22,591.60 L1610.01,593.43 L1610.80,595.04 L1611.59,596.35 L1612.37,597.33 L1613.16,597.91 L1613.95,598.10 L1614.74,597.87 L1615.52,597.24 L1616.31,596.23 L1617.10,594.88 L1617.89,593.25 L1618.68,591.40 L1619.46,589.40 L1620.25,587.34 L1621.04,585.29 L1621.83,583.34 L1622.61,581.57 L1623.40,580.04 L1624.19,578.82 L1624.98,577.96 L1625.76,577.49 L1626.55,577.42 L1627.34,577.77 L1628.13,578.52 L1628.91,579.63 L1629.70,581.07 L1630.49,582.77 L1631.28,584.67 L1632.06,586.70 L1632.85,588.77 L1633.64,590.79 L1634.43,592.70 L1635.21,594.40 L1636.00,595.85 L1636.79,596.97 L1637.58,597.72 L1638.36,598.07 L1639.15,598.02 L1639.94,597.55 L1640.73,596.69 L1641.51,595.48 L1642.30,593.96 L1643.09,592.19 L1643.88,590.24 L1644.67,588.20 L1645.45,586.14 L1646.24,584.14 L1647.03,582.28 L1647.82,580.64 L1648.60,579.29 L1649.39,578.28 L1650.18,577.64 L1650.97,577.40 L1651.75,577.58 L1652.54,578.16 L1653.33,579.13 L1654.12,580.43 L1654.90,582.04 L1655.69,583.86 L1656.48,585.85 L1657.27,587.91 L1658.05,589.96 L1658.84,591.92 L1659.63,593.72 L1660.42,595.28 L1661.20,596.54 L1661.99,597.45 L1662.78,597.97 L1663.57,598.09 L1664.35,597.79 L1665.14,597.10 L1665.93,596.03 L1666.72,594.63 L1667.50,592.95 L1668.29,591.07 L1669.08,589.06 L1669.87,586.99 L1670.66,584.95 L1671.44,583.03 L1672.23,581.29 L1673.02,579.82 L1673.81,578.65 L1674.59,577.85 L1675.38,577.45 L1676.17,577.45 L1676.96,577.87 L1677.74,578.68 L1678.53,579.85 L1679.32,581.34 L1680.11,583.08 L1680.5,604 L1230.4,604 Z" fill="rgba(200,200,220,0.09)" stroke="none"/><path d="M1230.40,577.40 L1231.19,577.61 L1231.98,578.22 L1232.76,579.21 L1233.55,580.54 L1234.34,582.16 L1235.13,584.00 L1235.91,585.99 L1236.70,588.05 L1237.49,590.10 L1238.28,592.06 L1239.06,593.84 L1239.85,595.38 L1240.64,596.62 L1241.43,597.50 L1242.21,598.00 L1243.00,598.08 L1243.79,597.76 L1244.58,597.03 L1245.36,595.94 L1246.15,594.52 L1246.94,592.82 L1247.73,590.93 L1248.51,588.91 L1249.30,586.84 L1250.09,584.81 L1250.88,582.90 L1251.66,581.18 L1252.45,579.72 L1253.24,578.58 L1254.03,577.81 L1254.81,577.44 L1255.60,577.47 L1256.39,577.92 L1257.18,578.75 L1257.97,579.95 L1258.75,581.45 L1259.54,583.21 L1260.33,585.15 L1261.12,587.19 L1261.90,589.26 L1262.69,591.26 L1263.48,593.12 L1264.27,594.77 L1265.05,596.14 L1265.84,597.18 L1266.63,597.84 L1267.42,598.10 L1268.20,597.94 L1268.99,597.38 L1269.78,596.43 L1270.57,595.14 L1271.35,593.56 L1272.14,591.74 L1272.93,589.76 L1273.72,587.70 L1274.50,585.65 L1275.29,583.68 L1276.08,581.87 L1276.87,580.29 L1277.65,579.02 L1278.44,578.09 L1279.23,577.54 L1280.02,577.41 L1280.80,577.68 L1281.59,578.36 L1282.38,579.41 L1283.17,580.79 L1283.96,582.45 L1284.74,584.33 L1285.53,586.33 L1286.32,588.40 L1287.11,590.44 L1287.89,592.37 L1288.68,594.12 L1289.47,595.61 L1290.26,596.79 L1291.04,597.61 L1291.83,598.04 L1292.62,598.06 L1293.41,597.66 L1294.19,596.87 L1294.98,595.72 L1295.77,594.25 L1296.56,592.52 L1297.34,590.60 L1298.13,588.56 L1298.92,586.50 L1299.71,584.48 L1300.49,582.60 L1301.28,580.92 L1302.07,579.51 L1302.86,578.43 L1303.64,577.72 L1304.43,577.41 L1305.22,577.52 L1306.01,578.03 L1306.79,578.93 L1307.58,580.18 L1308.37,581.73 L1309.16,583.53 L1309.95,585.49 L1310.73,587.54 L1311.52,589.60 L1312.31,591.59 L1313.10,593.42 L1313.88,595.03 L1314.67,596.34 L1315.46,597.32 L1316.25,597.91 L1317.03,598.10 L1317.82,597.88 L1318.61,597.25 L1319.40,596.24 L1320.18,594.89 L1320.97,593.26 L1321.76,591.41 L1322.55,589.42 L1323.33,587.36 L1324.12,585.31 L1324.91,583.36 L1325.70,581.59 L1326.48,580.06 L1327.27,578.83 L1328.06,577.97 L1328.85,577.49 L1329.63,577.42 L1330.42,577.77 L1331.21,578.51 L1332.00,579.62 L1332.78,581.05 L1333.57,582.76 L1334.36,584.66 L1335.15,586.68 L1335.94,588.75 L1336.72,590.77 L1337.51,592.68 L1338.30,594.39 L1339.09,595.83 L1339.87,596.96 L1340.66,597.71 L1341.45,598.07 L1342.24,598.02 L1343.02,597.56 L1343.81,596.70 L1344.60,595.49 L1345.39,593.97 L1346.17,592.21 L1346.96,590.26 L1347.75,588.22 L1348.54,586.15 L1349.32,584.15 L1350.11,582.30 L1350.90,580.66 L1351.69,579.30 L1352.47,578.28 L1353.26,577.64 L1354.05,577.40 L1354.84,577.57 L1355.62,578.15 L1356.41,579.12 L1357.20,580.42 L1357.99,582.02 L1358.77,583.85 L1359.56,585.83 L1360.35,587.89 L1361.14,589.94 L1361.93,591.91 L1362.71,593.71 L1363.50,595.27 L1364.29,596.53 L1365.08,597.45 L1365.86,597.97 L1366.65,598.09 L1367.44,597.80 L1368.23,597.10 L1369.01,596.04 L1369.80,594.64 L1370.59,592.97 L1371.38,591.09 L1372.16,589.07 L1372.95,587.01 L1373.74,584.97 L1374.53,583.05 L1375.31,581.31 L1376.10,579.83 L1376.89,578.66 L1377.68,577.86 L1378.46,577.45 L1379.25,577.45 L1380.04,577.86 L1380.83,578.67 L1381.61,579.84 L1382.40,581.32 L1383.19,583.06 L1383.98,584.99 L1384.77,587.03 L1385.55,589.09 L1386.34,591.10 L1387.13,592.98 L1387.92,594.65 L1388.70,596.05 L1389.49,597.11 L1390.28,597.80 L1391.07,598.09 L1391.85,597.97 L1392.64,597.44 L1393.43,596.52 L1394.22,595.26 L1395.00,593.69 L1395.79,591.89 L1396.58,589.92 L1397.37,587.87 L1398.15,585.81 L1398.94,583.83 L1399.73,582.00 L1400.52,580.41 L1401.30,579.11 L1402.09,578.15 L1402.88,577.57 L1403.67,577.40 L1404.45,577.64 L1405.24,578.29 L1406.03,579.31 L1406.82,580.67 L1407.60,582.31 L1408.39,584.17 L1409.18,586.17 L1409.97,588.24 L1410.76,590.28 L1411.54,592.22 L1412.33,593.99 L1413.12,595.50 L1413.91,596.71 L1414.69,597.56 L1415.48,598.02 L1416.27,598.07 L1417.06,597.71 L1417.84,596.95 L1418.63,595.82 L1419.42,594.38 L1420.21,592.66 L1420.99,590.76 L1421.78,588.73 L1422.57,586.66 L1423.36,584.64 L1424.14,582.74 L1424.93,581.04 L1425.72,579.61 L1426.51,578.50 L1427.29,577.76 L1428.08,577.42 L1428.87,577.49 L1429.66,577.97 L1430.44,578.84 L1431.23,580.07 L1432.02,581.60 L1432.81,583.38 L1433.59,585.33 L1434.38,587.37 L1435.17,589.44 L1435.96,591.43 L1436.75,593.28 L1437.53,594.91 L1438.32,596.25 L1439.11,597.25 L1439.90,597.88 L1440.68,598.10 L1441.47,597.91 L1442.26,597.31 L1443.05,596.33 L1443.83,595.01 L1444.62,593.40 L1445.41,591.57 L1446.20,589.58 L1446.98,587.52 L1447.77,585.47 L1448.56,583.51 L1449.35,581.72 L1450.13,580.17 L1450.92,578.92 L1451.71,578.02 L1452.50,577.51 L1453.28,577.41 L1454.07,577.73 L1454.86,578.44 L1455.65,579.52 L1456.43,580.93 L1457.22,582.61 L1458.01,584.50 L1458.80,586.52 L1459.58,588.58 L1460.37,590.62 L1461.16,592.53 L1461.95,594.26 L1462.74,595.73 L1463.52,596.88 L1464.31,597.67 L1465.10,598.06 L1465.89,598.04 L1466.67,597.61 L1467.46,596.78 L1468.25,595.60 L1469.04,594.10 L1469.82,592.35 L1470.61,590.42 L1471.40,588.38 L1472.19,586.32 L1472.97,584.31 L1473.76,582.44 L1474.55,580.78 L1475.34,579.40 L1476.12,578.35 L1476.91,577.68 L1477.70,577.41 L1478.49,577.55 L1479.27,578.09 L1480.06,579.03 L1480.85,580.31 L1481.64,581.88 L1482.42,583.69 L1483.21,585.67 L1484.00,587.72 L1484.79,589.78 L1485.57,591.76 L1486.36,593.57 L1487.15,595.16 L1487.94,596.44 L1488.73,597.39 L1489.51,597.94 L1490.30,598.10 L1491.09,597.84 L1491.88,597.17 L1492.66,596.13 L1493.45,594.76 L1494.24,593.11 L1495.03,591.24 L1495.81,589.24 L1496.60,587.17 L1497.39,585.13 L1498.18,583.19 L1498.96,581.44 L1499.75,579.94 L1500.54,578.74 L1501.33,577.91 L1502.11,577.47 L1502.90,577.44 L1503.69,577.82 L1504.48,578.59 L1505.26,579.73 L1506.05,581.20 L1506.84,582.92 L1507.63,584.83 L1508.41,586.86 L1509.20,588.93 L1509.99,590.95 L1510.78,592.84 L1511.56,594.53 L1512.35,595.95 L1513.14,597.04 L1513.93,597.76 L1514.72,598.08 L1515.50,597.99 L1516.29,597.50 L1517.08,596.61 L1517.87,595.37 L1518.65,593.83 L1519.44,592.04 L1520.23,590.08 L1521.02,588.03 L1521.80,585.97 L1522.59,583.98 L1523.38,582.14 L1524.17,580.53 L1524.95,579.20 L1525.74,578.21 L1526.53,577.60 L1527.32,577.40 L1528.10,577.61 L1528.89,578.22 L1529.68,579.22 L1530.47,580.55 L1531.25,582.17 L1532.04,584.02 L1532.83,586.01 L1533.62,588.07 L1534.40,590.12 L1535.19,592.07 L1535.98,593.86 L1536.77,595.39 L1537.55,596.63 L1538.34,597.51 L1539.13,598.00 L1539.92,598.08 L1540.71,597.75 L1541.49,597.02 L1542.28,595.93 L1543.07,594.50 L1543.86,592.81 L1544.64,590.91 L1545.43,588.89 L1546.22,586.83 L1547.01,584.80 L1547.79,582.88 L1548.58,581.17 L1549.37,579.71 L1550.16,578.58 L1550.94,577.81 L1551.73,577.43 L1552.52,577.47 L1553.31,577.92 L1554.09,578.76 L1554.88,579.96 L1555.67,581.47 L1556.46,583.23 L1557.24,585.17 L1558.03,587.21 L1558.82,589.27 L1559.61,591.28 L1560.39,593.14 L1561.18,594.79 L1561.97,596.16 L1562.76,597.19 L1563.54,597.84 L1564.33,598.10 L1565.12,597.94 L1565.91,597.37 L1566.70,596.42 L1567.48,595.13 L1568.27,593.54 L1569.06,591.72 L1569.85,589.74 L1570.63,587.69 L1571.42,585.63 L1572.21,583.66 L1573.00,581.85 L1573.78,580.28 L1574.57,579.01 L1575.36,578.08 L1576.15,577.54 L1576.93,577.41 L1577.72,577.69 L1578.51,578.37 L1579.30,579.42 L1580.08,580.81 L1580.87,582.47 L1581.66,584.34 L1582.45,586.35 L1583.23,588.42 L1584.02,590.46 L1584.81,592.39 L1585.60,594.13 L1586.38,595.62 L1587.17,596.80 L1587.96,597.62 L1588.75,598.04 L1589.53,598.05 L1590.32,597.66 L1591.11,596.86 L1591.90,595.71 L1592.69,594.23 L1593.47,592.50 L1594.26,590.58 L1595.05,588.55 L1595.84,586.48 L1596.62,584.46 L1597.41,582.58 L1598.20,580.90 L1598.99,579.50 L1599.77,578.42 L1600.56,577.72 L1601.35,577.41 L1602.14,577.52 L1602.92,578.04 L1603.71,578.94 L1604.50,580.19 L1605.29,581.75 L1606.07,583.54 L1606.86,585.51 L1607.65,587.56 L1608.44,589.62 L1609.22,591.60 L1610.01,593.43 L1610.80,595.04 L1611.59,596.35 L1612.37,597.33 L1613.16,597.91 L1613.95,598.10 L1614.74,597.87 L1615.52,597.24 L1616.31,596.23 L1617.10,594.88 L1617.89,593.25 L1618.68,591.40 L1619.46,589.40 L1620.25,587.34 L1621.04,585.29 L1621.83,583.34 L1622.61,581.57 L1623.40,580.04 L1624.19,578.82 L1624.98,577.96 L1625.76,577.49 L1626.55,577.42 L1627.34,577.77 L1628.13,578.52 L1628.91,579.63 L1629.70,581.07 L1630.49,582.77 L1631.28,584.67 L1632.06,586.70 L1632.85,588.77 L1633.64,590.79 L1634.43,592.70 L1635.21,594.40 L1636.00,595.85 L1636.79,596.97 L1637.58,597.72 L1638.36,598.07 L1639.15,598.02 L1639.94,597.55 L1640.73,596.69 L1641.51,595.48 L1642.30,593.96 L1643.09,592.19 L1643.88,590.24 L1644.67,588.20 L1645.45,586.14 L1646.24,584.14 L1647.03,582.28 L1647.82,580.64 L1648.60,579.29 L1649.39,578.28 L1650.18,577.64 L1650.97,577.40 L1651.75,577.58 L1652.54,578.16 L1653.33,579.13 L1654.12,580.43 L1654.90,582.04 L1655.69,583.86 L1656.48,585.85 L1657.27,587.91 L1658.05,589.96 L1658.84,591.92 L1659.63,593.72 L1660.42,595.28 L1661.20,596.54 L1661.99,597.45 L1662.78,597.97 L1663.57,598.09 L1664.35,597.79 L1665.14,597.10 L1665.93,596.03 L1666.72,594.63 L1667.50,592.95 L1668.29,591.07 L1669.08,589.06 L1669.87,586.99 L1670.66,584.95 L1671.44,583.03 L1672.23,581.29 L1673.02,579.82 L1673.81,578.65 L1674.59,577.85 L1675.38,577.45 L1676.17,577.45 L1676.96,577.87 L1677.74,578.68 L1678.53,579.85 L1679.32,581.34 L1680.11,583.08" fill="none" stroke="#7a798f" stroke-width="1.2"/><rect x="1230.4" y="571.5" width="450.0999999999999" height="32.5" rx="2.5" fill="none" stroke="#71708A" stroke-width="1.2"/><rect x="1637.25" y="571.5" width="42.950000000000045" height="32.5" fill="rgba(135,163,206,0.3)"/><rect x="1635.75" y="564" width="44.75000000000004" height="7.3" fill="#555560"/><line x1="1636.95" y1="571.5" x2="1636.95" y2="604" stroke="#9fa6c2" stroke-width="1.1"/><line x1="1679.8" y1="571.5" x2="1679.8" y2="604" stroke="#9fa6c2" stroke-width="1.1"/><path d="M1230.40,577.40 L1231.19,577.61 L1231.98,578.22 L1232.76,579.21 L1233.55,580.54 L1234.34,582.16 L1235.13,584.00 L1235.91,585.99 L1236.70,588.05 L1237.49,590.10 L1238.28,592.06 L1239.06,593.84 L1239.85,595.38 L1240.64,596.62 L1241.43,597.50 L1242.21,598.00 L1243.00,598.08 L1243.79,597.76 L1244.58,597.03 L1245.36,595.94 L1246.15,594.52 L1246.94,592.82 L1247.73,590.93 L1248.51,588.91 L1249.30,586.84 L1250.09,584.81 L1250.88,582.90 L1251.66,581.18 L1252.45,579.72 L1253.24,578.58 L1254.03,577.81 L1254.81,577.44 L1255.60,577.47 L1256.39,577.92 L1257.18,578.75 L1257.97,579.95 L1258.75,581.45 L1259.54,583.21 L1260.33,585.15 L1261.12,587.19 L1261.90,589.26 L1262.69,591.26 L1263.48,593.12 L1264.27,594.77 L1265.05,596.14 L1265.84,597.18 L1266.63,597.84 L1267.42,598.10 L1268.20,597.94 L1268.99,597.38 L1269.78,596.43 L1270.57,595.14 L1271.35,593.56 L1272.14,591.74 L1272.93,589.76 L1273.72,587.70 L1274.50,585.65 L1275.29,583.68 L1276.08,581.87 L1276.87,580.29 L1277.65,579.02 L1278.44,578.09 L1279.23,577.54 L1280.02,577.41 L1280.80,577.68 L1281.59,578.36 L1282.38,579.41 L1283.17,580.79 L1283.96,582.45 L1284.74,584.33 L1285.53,586.33 L1286.32,588.40 L1287.11,590.44 L1287.89,592.37 L1288.68,594.12 L1289.47,595.61 L1290.26,596.79 L1291.04,597.61 L1291.83,598.04 L1292.62,598.06 L1293.41,597.66 L1294.19,596.87 L1294.98,595.72 L1295.77,594.25 L1296.56,592.52 L1297.34,590.60 L1298.13,588.56 L1298.92,586.50 L1299.71,584.48 L1300.49,582.60 L1301.28,580.92 L1302.07,579.51 L1302.86,578.43 L1303.64,577.72 L1304.43,577.41 L1305.22,577.52 L1306.01,578.03 L1306.79,578.93 L1307.58,580.18 L1308.37,581.73 L1309.16,583.53 L1309.95,585.49 L1310.73,587.54 L1311.52,589.60 L1312.31,591.59 L1313.10,593.42 L1313.88,595.03 L1314.67,596.34 L1315.46,597.32 L1316.25,597.91 L1317.03,598.10 L1317.82,597.88 L1318.61,597.25 L1319.40,596.24 L1320.18,594.89 L1320.97,593.26 L1321.76,591.41 L1322.55,589.42 L1323.33,587.36 L1324.12,585.31 L1324.91,583.36 L1325.70,581.59 L1326.48,580.06 L1327.27,578.83 L1328.06,577.97 L1328.85,577.49 L1329.63,577.42 L1330.42,577.77 L1331.21,578.51 L1332.00,579.62 L1332.78,581.05 L1333.57,582.76 L1334.36,584.66 L1335.15,586.68 L1335.94,588.75 L1336.72,590.77 L1337.51,592.68 L1338.30,594.39 L1339.09,595.83 L1339.87,596.96 L1340.66,597.71 L1341.45,598.07 L1342.24,598.02 L1343.02,597.56 L1343.81,596.70 L1344.60,595.49 L1345.39,593.97 L1346.17,592.21 L1346.96,590.26 L1347.75,588.22 L1348.54,586.15 L1349.32,584.15 L1350.11,582.30 L1350.90,580.66 L1351.69,579.30 L1352.47,578.28 L1353.26,577.64 L1354.05,577.40 L1354.84,577.57 L1355.62,578.15 L1356.41,579.12 L1357.20,580.42 L1357.99,582.02 L1358.77,583.85 L1359.56,585.83 L1360.35,587.89 L1361.14,589.94 L1361.93,591.91 L1362.71,593.71 L1363.50,595.27 L1364.29,596.53 L1365.08,597.45 L1365.86,597.97 L1366.65,598.09 L1367.44,597.80 L1368.23,597.10 L1369.01,596.04 L1369.80,594.64 L1370.59,592.97 L1371.38,591.09 L1372.16,589.07 L1372.95,587.01 L1373.74,584.97 L1374.53,583.05 L1375.31,581.31 L1376.10,579.83 L1376.89,578.66 L1377.68,577.86 L1378.46,577.45 L1379.25,577.45 L1380.04,577.86 L1380.83,578.67 L1381.61,579.84 L1382.40,581.32 L1383.19,583.06 L1383.98,584.99 L1384.77,587.03 L1385.55,589.09 L1386.34,591.10 L1387.13,592.98 L1387.92,594.65 L1388.70,596.05 L1389.49,597.11 L1390.28,597.80 L1391.07,598.09 L1391.85,597.97 L1392.64,597.44 L1393.43,596.52 L1394.22,595.26 L1395.00,593.69 L1395.79,591.89 L1396.58,589.92 L1397.37,587.87 L1398.15,585.81 L1398.94,583.83 L1399.73,582.00 L1400.52,580.41 L1401.30,579.11 L1402.09,578.15 L1402.88,577.57 L1403.67,577.40 L1404.45,577.64 L1405.24,578.29 L1406.03,579.31 L1406.82,580.67 L1407.60,582.31 L1408.39,584.17 L1409.18,586.17 L1409.97,588.24 L1410.76,590.28 L1411.54,592.22 L1412.33,593.99 L1413.12,595.50 L1413.91,596.71 L1414.69,597.56 L1415.48,598.02 L1416.27,598.07 L1417.06,597.71 L1417.84,596.95 L1418.63,595.82 L1419.42,594.38 L1420.21,592.66 L1420.99,590.76 L1421.78,588.73 L1422.57,586.66 L1423.36,584.64 L1424.14,582.74 L1424.93,581.04 L1425.72,579.61 L1426.51,578.50 L1427.29,577.76 L1428.08,577.42 L1428.87,577.49 L1429.66,577.97 L1430.44,578.84 L1431.23,580.07 L1432.02,581.60 L1432.81,583.38 L1433.59,585.33 L1434.38,587.37 L1435.17,589.44 L1435.96,591.43 L1436.75,593.28 L1437.53,594.91 L1438.32,596.25 L1439.11,597.25 L1439.90,597.88 L1440.68,598.10 L1441.47,597.91 L1442.26,597.31 L1443.05,596.33 L1443.83,595.01 L1444.62,593.40 L1445.41,591.57 L1446.20,589.58 L1446.98,587.52 L1447.77,585.47 L1448.56,583.51 L1449.35,581.72 L1450.13,580.17 L1450.92,578.92 L1451.71,578.02 L1452.50,577.51 L1453.28,577.41 L1454.07,577.73 L1454.86,578.44 L1455.65,579.52 L1456.43,580.93 L1457.22,582.61 L1458.01,584.50 L1458.80,586.52 L1459.58,588.58 L1460.37,590.62 L1461.16,592.53 L1461.95,594.26 L1462.74,595.73 L1463.52,596.88 L1464.31,597.67 L1465.10,598.06 L1465.89,598.04 L1466.67,597.61 L1467.46,596.78 L1468.25,595.60 L1469.04,594.10 L1469.82,592.35 L1470.61,590.42 L1471.40,588.38 L1472.19,586.32 L1472.97,584.31 L1473.76,582.44 L1474.55,580.78 L1475.34,579.40 L1476.12,578.35 L1476.91,577.68 L1477.70,577.41 L1478.49,577.55 L1479.27,578.09 L1480.06,579.03 L1480.85,580.31 L1481.64,581.88 L1482.42,583.69 L1483.21,585.67 L1484.00,587.72 L1484.79,589.78 L1485.57,591.76 L1486.36,593.57 L1487.15,595.16 L1487.94,596.44 L1488.73,597.39 L1489.51,597.94 L1490.30,598.10 L1491.09,597.84 L1491.88,597.17 L1492.66,596.13 L1493.45,594.76 L1494.24,593.11 L1495.03,591.24 L1495.81,589.24 L1496.60,587.17 L1497.39,585.13 L1498.18,583.19 L1498.96,581.44 L1499.75,579.94 L1500.54,578.74 L1501.33,577.91 L1502.11,577.47 L1502.90,577.44 L1503.69,577.82 L1504.48,578.59 L1505.26,579.73 L1506.05,581.20 L1506.84,582.92 L1507.63,584.83 L1508.41,586.86 L1509.20,588.93 L1509.99,590.95 L1510.78,592.84 L1511.56,594.53 L1512.35,595.95 L1513.14,597.04 L1513.93,597.76 L1514.72,598.08 L1515.50,597.99 L1516.29,597.50 L1517.08,596.61 L1517.87,595.37 L1518.65,593.83 L1519.44,592.04 L1520.23,590.08 L1521.02,588.03 L1521.80,585.97 L1522.59,583.98 L1523.38,582.14 L1524.17,580.53 L1524.95,579.20 L1525.74,578.21 L1526.53,577.60 L1527.32,577.40 L1528.10,577.61 L1528.89,578.22 L1529.68,579.22 L1530.47,580.55 L1531.25,582.17 L1532.04,584.02 L1532.83,586.01 L1533.62,588.07 L1534.40,590.12 L1535.19,592.07 L1535.98,593.86 L1536.77,595.39 L1537.55,596.63 L1538.34,597.51 L1539.13,598.00 L1539.92,598.08 L1540.71,597.75 L1541.49,597.02 L1542.28,595.93 L1543.07,594.50 L1543.86,592.81 L1544.64,590.91 L1545.43,588.89 L1546.22,586.83 L1547.01,584.80 L1547.79,582.88 L1548.58,581.17 L1549.37,579.71 L1550.16,578.58 L1550.94,577.81 L1551.73,577.43 L1552.52,577.47 L1553.31,577.92 L1554.09,578.76 L1554.88,579.96 L1555.67,581.47 L1556.46,583.23 L1557.24,585.17 L1558.03,587.21 L1558.82,589.27 L1559.61,591.28 L1560.39,593.14 L1561.18,594.79 L1561.97,596.16 L1562.76,597.19 L1563.54,597.84 L1564.33,598.10 L1565.12,597.94 L1565.91,597.37 L1566.70,596.42 L1567.48,595.13 L1568.27,593.54 L1569.06,591.72 L1569.85,589.74 L1570.63,587.69 L1571.42,585.63 L1572.21,583.66 L1573.00,581.85 L1573.78,580.28 L1574.57,579.01 L1575.36,578.08 L1576.15,577.54 L1576.93,577.41 L1577.72,577.69 L1578.51,578.37 L1579.30,579.42 L1580.08,580.81 L1580.87,582.47 L1581.66,584.34 L1582.45,586.35 L1583.23,588.42 L1584.02,590.46 L1584.81,592.39 L1585.60,594.13 L1586.38,595.62 L1587.17,596.80 L1587.96,597.62 L1588.75,598.04 L1589.53,598.05 L1590.32,597.66 L1591.11,596.86 L1591.90,595.71 L1592.69,594.23 L1593.47,592.50 L1594.26,590.58 L1595.05,588.55 L1595.84,586.48 L1596.62,584.46 L1597.41,582.58 L1598.20,580.90 L1598.99,579.50 L1599.77,578.42 L1600.56,577.72 L1601.35,577.41 L1602.14,577.52 L1602.92,578.04 L1603.71,578.94 L1604.50,580.19 L1605.29,581.75 L1606.07,583.54 L1606.86,585.51 L1607.65,587.56 L1608.44,589.62 L1609.22,591.60 L1610.01,593.43 L1610.80,595.04 L1611.59,596.35 L1612.37,597.33 L1613.16,597.91 L1613.95,598.10 L1614.74,597.87 L1615.52,597.24 L1616.31,596.23 L1617.10,594.88 L1617.89,593.25 L1618.68,591.40 L1619.46,589.40 L1620.25,587.34 L1621.04,585.29 L1621.83,583.34 L1622.61,581.57 L1623.40,580.04 L1624.19,578.82 L1624.98,577.96 L1625.76,577.49 L1626.55,577.42 L1627.34,577.77 L1628.13,578.52 L1628.91,579.63 L1629.70,581.07 L1630.49,582.77 L1631.28,584.67 L1632.06,586.70 L1632.85,588.77 L1633.64,590.79 L1634.43,592.70 L1635.21,594.40 L1636.00,595.85 L1636.79,596.97 L1637.58,597.72 L1638.36,598.07 L1639.15,598.02 L1639.94,597.55 L1640.73,596.69 L1641.51,595.48 L1642.30,593.96 L1643.09,592.19 L1643.88,590.24 L1644.67,588.20 L1645.45,586.14 L1646.24,584.14 L1647.03,582.28 L1647.82,580.64 L1648.60,579.29 L1649.39,578.28 L1650.18,577.64 L1650.97,577.40 L1651.75,577.58 L1652.54,578.16 L1653.33,579.13 L1654.12,580.43 L1654.90,582.04 L1655.69,583.86 L1656.48,585.85 L1657.27,587.91 L1658.05,589.96 L1658.84,591.92 L1659.63,593.72 L1660.42,595.28 L1661.20,596.54 L1661.99,597.45 L1662.78,597.97 L1663.57,598.09 L1664.35,597.79 L1665.14,597.10 L1665.93,596.03 L1666.72,594.63 L1667.50,592.95 L1668.29,591.07 L1669.08,589.06 L1669.87,586.99 L1670.66,584.95 L1671.44,583.03 L1672.23,581.29 L1673.02,579.82 L1673.81,578.65 L1674.59,577.85 L1675.38,577.45 L1676.17,577.45 L1676.96,577.87 L1677.74,578.68 L1678.53,579.85 L1679.32,581.34 L1680.11,583.08" fill="none" stroke="#8d9bbd" stroke-width="1.2" clip-path="url(#sel581)"/><clipPath id="sel581"><rect x="1637.25" y="571.5" width="42.950000000000045" height="32.5"/></clipPath><rect x="1655.925" y="566.3" width="1.2" height="2.6" fill="#e8e8e8"/><rect x="1658.125" y="566.3" width="1.2" height="2.6" fill="#e8e8e8"/><rect x="1660.325" y="566.3" width="1.2" height="2.6" fill="#e8e8e8"/><rect x="1634.15" y="577.6" width="6.2" height="20.4" rx="1.6" fill="#34335e" stroke="#c0c4dc" stroke-width="1.4"/><rect x="1677.1000000000001" y="577.6" width="6.2" height="20.4" rx="1.6" fill="#34335e" stroke="#c0c4dc" stroke-width="1.4"/><text transform="translate(1265.80,609.4) scale(0.88,1)" text-anchor="middle" class="al">1,040</text><text transform="translate(1334.58,609.4) scale(0.88,1)" text-anchor="middle" class="al">1,060</text><text transform="translate(1403.37,609.4) scale(0.88,1)" text-anchor="middle" class="al">1,080</text><text transform="translate(1472.15,609.4) scale(0.88,1)" text-anchor="middle" class="al">1,100</text><text transform="translate(1540.93,609.4) scale(0.88,1)" text-anchor="middle" class="al">1,120</text><text transform="translate(1609.72,609.4) scale(0.88,1)" text-anchor="middle" class="al">1,140</text><text transform="translate(1678.50,609.4) scale(0.88,1)" text-anchor="middle" class="al">1,160</text><g transform="translate(581,0)" fill="none" stroke="#bdbccf" stroke-width="1.2"><path d="M978,237.7 H995.8 V250.8 H982 V233.6"/><path d="M1013.5,233.8 L1010.1,237.3 L1013.5,240.8 M1010.1,237.3 H1023.7 V250.3 H1010.1 V243.5"/><path d="M1069.5,240.2 L1077,247 L1084.5,240.2 M1077,233.6 V247 M1069.5,243.8 V250.8 H1084.6 V243.8"/><path d="M1098.5,233.8 H1107.2 L1111.2,238 V250.8 H1098.5 Z M1107.2,233.8 V238 H1111.2 M1100.8,237.8 H1104.6 M1100.8,241.8 H1108.8 M1100.8,245.8 H1108.8"/><g transform="translate(1037.6,233.1) scale(0.30689655172413793)"><path d="M47,18.9h9.8V8.7 M56.3,20.1 C52.1,9,40.5,0.6,26.8,2.1C12.6,3.7,1.6,16.2,2.1,30.6 M13,41.1H3.1v10.2 M3.7,39.9c4.2,11.1,15.8,19.5,29.5,18 c14.2-1.6,25.2-14.1,24.7-28.5" stroke-width="3.9101123595505616"/></g></g></svg>
<div style="position:absolute;left:8px;top:660px;width:1600px;height:1px;background:#2e2d33"></div>
<div style="position:absolute;left:8px;top:684.8px;font:bold 28.8px/36px 'Liberation Sans',sans-serif;color:#f2f2f2">H</div><div style="position:absolute;left:51.8px;top:684.8px;font:bold 28.8px/36px 'Liberation Sans',sans-serif;color:#f2f2f2">d</div>
</body></html>
